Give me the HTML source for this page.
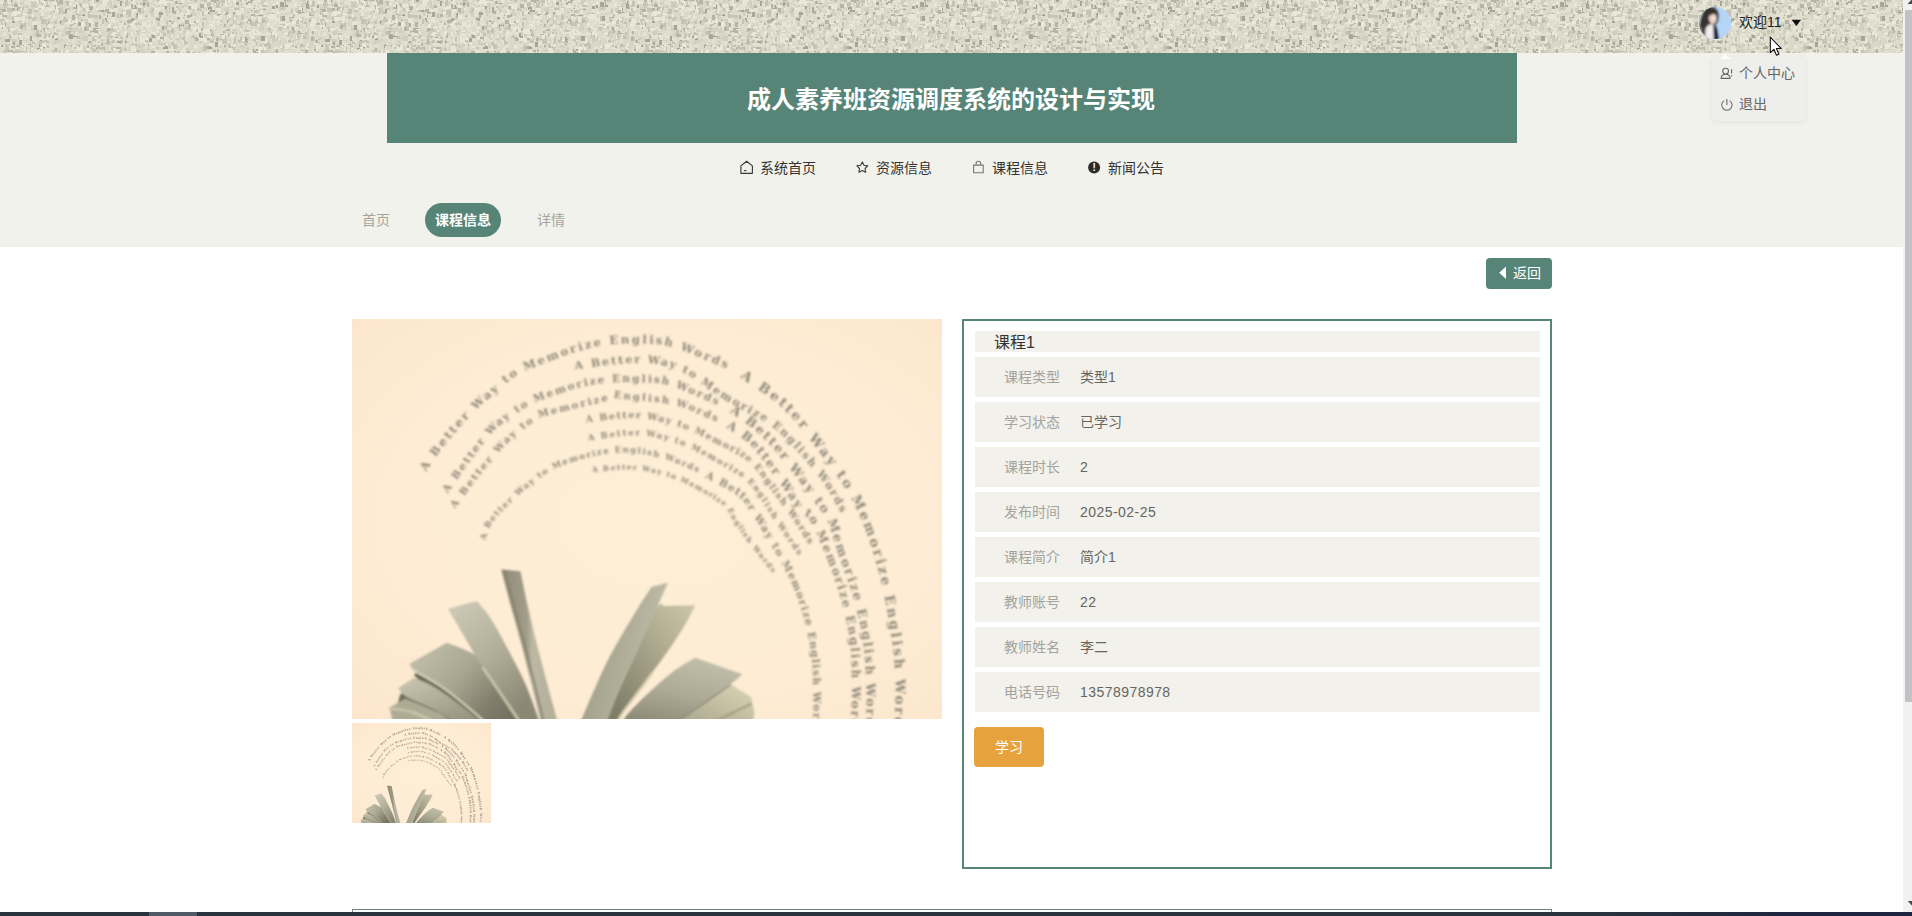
<!DOCTYPE html>
<html lang="zh-CN">
<head>
<meta charset="utf-8">
<title>成人素养班资源调度系统的设计与实现</title>
<style>
*{box-sizing:border-box;margin:0;padding:0}
html,body{width:1912px;height:916px;overflow:hidden;background:#fff}
body{font-family:"Liberation Sans","Noto Sans CJK SC",sans-serif;font-size:14px;color:#333;position:relative}
.abs{position:absolute}
#page{position:absolute;left:0;top:0;width:1903px;height:912px;overflow:hidden;background:#fff}
.tex{position:absolute;left:-4px;top:-4px;display:block;filter:blur(0.6px)}
#head{position:absolute;left:0;top:53px;width:1904px;height:194px;background:#f2f2ec}
#banner{position:absolute;left:387px;top:53px;width:1130px;height:90px;background:#568578;color:#fff;font-size:24px;font-weight:700;text-align:center;line-height:90px;letter-spacing:0}
#banner span{position:relative;top:2px;left:-1px}
.nav{position:absolute;top:158px;height:20px;line-height:20px;font-size:14px;color:#333;white-space:nowrap}
.nav svg{position:absolute;left:-20px;top:3px}
.bc{position:absolute;top:203px;height:34px;line-height:34px;font-size:14px;color:#a5a59d;white-space:nowrap}
#pill{position:absolute;left:425px;top:203px;width:76px;height:34px;border-radius:17px;background:#568578;color:#fff;font-weight:700;text-align:center;line-height:34px;font-size:14px}
#back{position:absolute;left:1486px;top:258px;width:66px;height:31px;border-radius:4px;background:#568578;color:#fff;font-size:14px;line-height:31px}
#back span{position:absolute;left:27px;top:0}
#photo{position:absolute;left:352px;top:319px;width:590px;height:400px;overflow:hidden;background:#feecd4}
#thumb{position:absolute;left:352px;top:723px;width:139px;height:100px;overflow:hidden;background:#feecd4}
#panel{position:absolute;left:962px;top:319px;width:590px;height:550px;border:2px solid #568578;background:#fff}
.row{position:absolute;left:975px;width:565px;height:40px;background:#f2f1eb;line-height:40px;font-size:14px}
.row .l{position:absolute;left:29px;color:#a3a39d}
.row .v{position:absolute;left:105px;color:#66665f}
.row .d{letter-spacing:.45px}
#trow{position:absolute;left:975px;top:331px;width:565px;height:21px;background:#f2f1eb;font-size:16px;line-height:21px;color:#333}
#trow span{position:absolute;left:19px;top:1px}
#study{position:absolute;left:974px;top:727px;width:70px;height:40px;border-radius:4px;background:#e6a23c;color:#fff;font-size:14px;text-align:center;line-height:40px}
#next{position:absolute;left:352px;top:909px;width:1200px;height:20px;border:1px solid #6a857c;background:#fff}
#sb{position:absolute;left:1903px;top:0;width:9px;height:912px;background:#f2f1f2;overflow:hidden}
#sb i{position:absolute;left:2px;top:10px;width:7px;height:692px;background:#c2c1c3}
#sb svg{position:absolute;left:0}
#task{position:absolute;left:0;top:912px;width:1912px;height:4px;background:linear-gradient(90deg,#27333d 0,#27333d 1600px,#1d2440 1800px)}
#task i{position:absolute;left:149px;top:0;width:48px;height:4px;background:#4f5a66}
#user{position:absolute;left:1739px;top:12px;height:20px;line-height:20px;font-size:14px;color:#222;white-space:nowrap}
#avatar{position:absolute;left:1698.5px;top:7px;width:32px;height:32px;border-radius:50%;overflow:hidden;background:#b7d3f3}
#menu{position:absolute;left:1712px;top:57px;width:93px;height:64px;background:#eeeeec;box-shadow:0 1px 6px rgba(0,0,0,.07);border-radius:3px}
.mi{position:absolute;left:1739px;height:20px;line-height:20px;font-size:14px;color:#666;white-space:nowrap}
</style>
</head>
<body>
<div id="page">
<svg class="tex" width="1912" height="60"><defs><pattern id="tx" width="320" height="60" patternUnits="userSpaceOnUse"><rect width="320" height="60" fill="#d9d8c7"/><path fill="#e8e7d9" d="M200 39h3v2h-3zM185 35h4v2h-4zM297 23h2v4h-2zM283 52h2v2h-2zM248 24h3v2h-3zM40 9h2v2h-2zM142 -2h2v3h-2zM-2 34h2v2h-2zM312 -1h2v3h-2zM184 28h3v4h-3zM39 12h3v3h-3zM212 51h3v4h-3zM68 24h2v3h-2zM153 48h2v2h-2zM180 18h3v2h-3zM80 14h2v2h-2zM7 14h3v3h-3zM81 1h3v3h-3zM233 9h3v2h-3zM180 9h3v2h-3zM256 47h2v2h-2zM115 3h5v5h-5zM182 59h2v5h-2zM23 38h3v4h-3zM145 47h2v3h-2zM146 27h3v2h-3zM295 3h2v2h-2zM141 54h5v4h-5zM190 18h3v3h-3zM98 43h3v2h-3zM127 21h5v3h-5zM141 4h3v2h-3zM102 44h4v4h-4zM199 5h3v4h-3zM173 33h2v2h-2zM248 -2h3v4h-3zM153 59h2v5h-2zM167 26h3v3h-3zM124 24h3v2h-3zM94 18h3v4h-3zM235 0h2v5h-2zM102 14h2v2h-2zM102 50h5v5h-5zM102 58h5v3h-5zM56 50h2v3h-2zM233 47h4v3h-4zM85 57h2v4h-2zM99 17h3v3h-3zM52 2h3v3h-3zM158 44h4v5h-4zM79 6h4v3h-4zM74 26h2v5h-2zM257 -2h2v2h-2zM101 58h2v5h-2zM1 52h4v5h-4zM316 35h2v3h-2zM14 -1h2v2h-2zM32 45h2v5h-2zM145 28h5v2h-5zM238 43h2v3h-2zM176 29h2v2h-2zM293 58h4v3h-4zM116 29h2v5h-2zM276 11h2v3h-2zM193 23h3v3h-3zM106 8h3v3h-3zM93 28h3v5h-3zM126 36h5v3h-5zM309 48h4v5h-4zM210 38h2v2h-2zM202 17h4v2h-4zM90 53h2v5h-2zM205 26h3v4h-3zM216 -2h5v2h-5zM93 57h2v3h-2zM24 43h5v3h-5zM156 36h5v2h-5zM233 32h2v3h-2zM106 10h2v2h-2zM74 13h3v4h-3zM159 36h2v2h-2zM308 -1h3v4h-3zM90 22h3v2h-3zM111 9h3v2h-3zM245 1h5v5h-5zM195 51h3v2h-3zM319 21h3v2h-3zM222 53h4v2h-4zM124 7h3v3h-3zM169 49h4v3h-4zM69 26h3v4h-3zM87 11h3v3h-3zM250 3h3v3h-3zM122 59h2v2h-2zM177 53h3v2h-3zM141 5h4v4h-4zM3 21h5v5h-5zM49 14h2v4h-2zM119 58h2v3h-2zM175 39h2v3h-2zM271 57h3v4h-3zM297 23h4v3h-4zM223 40h4v3h-4zM279 35h2v3h-2zM266 12h5v2h-5zM287 36h2v2h-2zM208 36h4v2h-4zM258 4h2v4h-2zM29 39h4v3h-4zM87 32h4v3h-4zM157 6h2v5h-2zM103 0h3v3h-3zM127 13h4v3h-4zM71 16h4v3h-4zM227 42h5v5h-5zM291 42h2v4h-2zM205 13h4v2h-4zM101 34h2v4h-2zM225 -2h5v3h-5zM298 2h3v2h-3zM9 46h3v4h-3zM8 11h3v2h-3zM22 3h2v4h-2zM45 -1h3v2h-3zM65 14h4v3h-4zM44 57h2v3h-2zM289 48h3v2h-3zM151 16h3v2h-3zM220 53h3v2h-3zM10 49h3v5h-3zM169 55h5v3h-5zM319 42h2v2h-2zM1 41h4v2h-4zM250 52h4v5h-4zM252 9h2v4h-2zM103 31h2v2h-2zM44 58h2v2h-2zM77 53h5v3h-5zM99 27h5v2h-5zM274 46h4v4h-4zM150 49h2v2h-2z"/><path fill="#dad9ca" d="M17 3h4v2h-4zM44 33h2v2h-2zM274 5h3v2h-3zM90 4h4v5h-4zM188 4h5v2h-5zM122 3h2v5h-2zM173 44h4v3h-4zM58 30h4v2h-4zM177 36h3v3h-3zM179 8h2v3h-2zM218 53h3v2h-3zM261 58h2v5h-2zM73 42h4v3h-4zM170 11h3v2h-3zM300 55h2v2h-2zM311 50h5v2h-5zM177 7h3v5h-3zM121 46h3v4h-3zM232 40h5v3h-5zM254 6h4v3h-4zM7 53h4v4h-4zM164 41h4v2h-4zM52 54h4v3h-4zM130 57h5v4h-5zM171 33h3v2h-3zM194 19h5v2h-5zM64 50h2v3h-2zM205 7h5v3h-5zM171 33h3v2h-3zM64 0h3v4h-3zM319 17h2v3h-2zM123 57h4v3h-4zM219 40h5v5h-5zM5 2h2v2h-2zM241 15h3v2h-3zM71 23h3v2h-3zM266 46h4v2h-4zM255 55h3v2h-3zM99 2h5v5h-5zM153 37h3v3h-3zM109 41h5v2h-5zM144 27h5v4h-5zM182 6h4v3h-4zM85 28h4v2h-4zM130 49h2v3h-2zM209 22h2v5h-2zM232 3h2v5h-2zM62 12h2v2h-2zM122 28h3v3h-3zM12 59h4v2h-4zM187 12h5v3h-5zM317 29h3v2h-3zM275 56h2v3h-2zM303 3h3v3h-3zM34 14h3v2h-3zM117 6h3v2h-3zM118 45h4v5h-4zM36 21h4v2h-4zM52 38h5v2h-5zM188 9h3v3h-3zM14 48h2v2h-2zM77 38h5v4h-5zM159 1h2v3h-2zM111 37h5v2h-5zM296 13h3v3h-3zM226 30h5v3h-5zM314 29h2v2h-2zM44 49h3v3h-3zM65 54h2v2h-2zM71 14h3v3h-3zM301 14h3v2h-3zM74 16h2v2h-2zM270 -1h2v2h-2zM100 31h2v3h-2zM210 50h4v5h-4zM30 17h4v3h-4zM197 19h3v2h-3zM272 28h3v5h-3zM209 -1h5v2h-5zM233 6h5v2h-5zM15 20h5v4h-5zM228 40h4v2h-4zM165 36h2v5h-2zM61 27h2v5h-2zM48 55h3v5h-3zM102 43h3v4h-3zM148 46h3v3h-3zM246 25h3v3h-3zM41 50h3v2h-3zM93 47h2v2h-2zM204 48h2v2h-2zM150 10h4v5h-4zM240 29h2v2h-2zM71 42h3v3h-3zM149 51h3v5h-3zM12 -1h5v5h-5zM185 19h2v5h-2zM105 16h4v4h-4zM281 54h3v5h-3zM241 47h5v2h-5zM283 43h3v5h-3zM117 49h3v4h-3zM253 20h4v5h-4zM117 23h3v2h-3zM162 28h3v4h-3zM183 34h5v3h-5zM246 35h2v4h-2zM30 53h3v3h-3zM28 55h3v3h-3zM130 48h2v2h-2zM192 8h3v3h-3zM101 21h2v3h-2zM93 21h4v3h-4zM42 54h4v2h-4zM137 5h2v2h-2zM197 42h2v2h-2zM113 6h5v2h-5zM120 18h3v2h-3zM9 8h3v2h-3zM101 37h3v2h-3zM198 31h3v3h-3zM22 14h2v2h-2zM262 50h4v3h-4zM203 39h3v4h-3zM94 59h4v2h-4zM19 42h4v5h-4zM252 47h2v2h-2zM176 10h4v2h-4zM223 1h4v2h-4zM196 10h4v2h-4zM271 13h4v3h-4zM177 55h5v5h-5zM205 0h5v2h-5zM114 34h2v4h-2zM111 15h5v4h-5zM319 38h4v5h-4zM181 20h2v2h-2zM80 18h3v2h-3zM146 8h4v3h-4zM237 46h2v2h-2zM167 45h5v5h-5zM248 59h2v5h-2zM144 38h2v5h-2zM78 17h3v3h-3zM288 10h5v3h-5zM262 27h4v3h-4zM150 34h4v5h-4zM188 33h5v4h-5zM269 13h3v3h-3zM46 10h3v5h-3zM248 12h3v5h-3zM260 45h2v3h-2zM198 51h5v4h-5zM65 35h2v3h-2zM182 44h2v2h-2zM137 2h3v3h-3zM289 34h3v3h-3zM15 56h2v5h-2zM216 38h2v2h-2zM279 43h2v3h-2zM127 44h5v3h-5zM89 17h2v4h-2zM246 23h2v5h-2zM27 53h3v2h-3zM273 41h3v3h-3zM28 32h2v2h-2zM130 58h4v2h-4zM229 11h4v4h-4zM152 7h2v2h-2zM302 12h2v4h-2zM276 16h5v3h-5zM135 23h5v3h-5zM173 35h3v4h-3zM319 49h3v2h-3zM176 31h3v5h-3zM266 11h4v3h-4zM127 -1h3v3h-3zM130 1h2v4h-2zM133 51h3v2h-3zM192 23h2v3h-2zM11 4h3v5h-3zM223 23h2v2h-2zM5 4h2v4h-2zM211 51h4v5h-4zM248 43h3v5h-3zM207 58h4v2h-4zM27 9h2v2h-2zM151 0h2v4h-2z"/><path fill="#d1d0bf" d="M112 38h4v2h-4zM283 34h5v2h-5zM31 1h5v5h-5zM195 54h3v5h-3zM190 7h2v4h-2zM270 32h3v2h-3zM250 20h2v4h-2zM243 56h4v2h-4zM235 23h5v3h-5zM240 37h2v2h-2zM139 0h2v2h-2zM285 -1h4v3h-4zM226 30h2v3h-2zM151 17h3v2h-3zM268 52h2v4h-2zM303 22h5v5h-5zM74 16h5v3h-5zM217 44h4v5h-4zM31 45h5v4h-5zM133 13h3v2h-3zM205 17h5v3h-5zM159 10h3v4h-3zM228 37h5v3h-5zM128 45h3v3h-3zM255 31h2v5h-2zM14 25h2v2h-2zM227 13h4v3h-4zM221 42h3v4h-3zM131 12h2v3h-2zM213 21h5v3h-5zM211 56h2v3h-2zM210 1h4v2h-4zM228 55h2v3h-2zM14 17h5v3h-5zM42 1h3v3h-3zM240 -1h3v3h-3zM132 45h4v2h-4zM150 -2h3v3h-3zM236 59h2v3h-2zM153 50h2v2h-2zM306 14h2v3h-2zM206 4h3v2h-3zM280 7h2v2h-2zM42 55h5v3h-5zM18 0h4v5h-4zM158 47h2v5h-2zM31 37h2v2h-2zM133 5h3v2h-3zM182 19h4v2h-4zM88 37h3v2h-3zM114 37h2v3h-2zM27 56h2v2h-2zM236 3h3v5h-3zM24 15h5v3h-5zM174 7h4v2h-4zM68 42h2v2h-2zM235 26h3v2h-3zM314 7h3v5h-3zM82 59h5v2h-5zM75 7h2v3h-2zM291 35h3v5h-3zM91 55h4v5h-4zM312 20h4v2h-4zM213 38h2v3h-2zM96 28h2v5h-2zM72 20h5v2h-5zM181 13h5v3h-5zM162 27h2v2h-2zM36 9h3v3h-3zM174 11h3v4h-3zM96 18h2v3h-2zM241 36h2v2h-2zM303 54h2v5h-2zM232 38h2v2h-2zM7 15h2v3h-2zM72 44h5v5h-5zM222 28h4v5h-4zM183 59h2v2h-2zM242 22h5v3h-5zM138 52h4v2h-4zM52 21h3v3h-3zM99 41h3v2h-3zM223 46h4v4h-4zM4 27h2v5h-2zM189 54h2v4h-2zM27 9h2v5h-2zM260 1h2v2h-2zM27 51h3v2h-3zM3 2h3v2h-3zM59 20h4v2h-4zM193 34h3v5h-3zM53 59h2v3h-2zM291 27h2v2h-2zM289 12h4v5h-4zM179 45h3v3h-3zM232 16h3v5h-3zM162 -2h3v5h-3zM87 5h3v4h-3zM298 -2h3v2h-3zM14 15h3v2h-3zM77 13h2v3h-2zM62 53h4v2h-4zM12 40h5v3h-5zM5 22h2v3h-2zM96 2h4v3h-4zM13 21h3v2h-3zM157 38h2v4h-2zM220 40h4v3h-4zM55 51h3v2h-3zM22 13h4v5h-4zM211 42h5v2h-5zM103 25h2v5h-2zM245 13h5v3h-5zM98 5h3v3h-3zM12 -1h2v5h-2zM84 4h4v5h-4zM95 11h3v3h-3zM88 55h3v2h-3zM28 44h4v2h-4zM84 21h5v3h-5zM179 10h2v3h-2zM223 5h2v4h-2zM146 53h2v4h-2zM72 44h2v5h-2zM142 48h2v3h-2zM98 13h5v2h-5zM160 34h2v2h-2zM210 37h3v2h-3zM130 50h5v4h-5zM156 39h2v5h-2zM88 53h5v2h-5zM12 20h2v4h-2zM253 11h2v3h-2zM190 58h3v3h-3zM182 0h2v5h-2zM84 27h3v2h-3zM73 38h5v4h-5zM35 15h2v5h-2zM22 24h2v4h-2zM3 18h3v3h-3zM23 23h2v5h-2zM224 33h3v5h-3zM-2 28h3v4h-3zM191 20h3v2h-3zM134 37h3v4h-3zM207 7h3v2h-3zM184 20h3v2h-3zM152 26h4v4h-4zM146 26h3v3h-3zM146 37h2v3h-2zM206 25h5v3h-5zM96 52h2v4h-2zM104 32h2v2h-2zM138 12h3v2h-3zM205 57h4v3h-4zM147 12h2v5h-2zM124 19h3v3h-3z"/><path fill="#e1e0d1" d="M28 37h2v4h-2zM216 47h5v4h-5zM183 17h4v3h-4zM45 58h3v2h-3zM109 47h3v2h-3zM83 26h3v2h-3zM310 34h4v3h-4zM198 23h5v4h-5zM203 1h2v3h-2zM81 5h2v3h-2zM243 28h3v3h-3zM173 45h2v2h-2zM262 -1h5v2h-5zM239 14h2v3h-2zM59 56h5v2h-5zM242 54h5v2h-5zM106 -1h3v2h-3zM100 42h4v4h-4zM35 40h3v3h-3zM185 7h2v5h-2zM218 30h2v5h-2zM41 14h2v2h-2zM251 42h4v4h-4zM43 49h3v2h-3zM155 42h3v4h-3zM142 36h3v4h-3zM123 29h4v5h-4zM29 29h2v3h-2zM135 22h4v3h-4zM164 46h3v2h-3zM205 39h5v3h-5zM69 33h3v3h-3zM190 15h4v2h-4zM136 55h2v2h-2zM26 -1h5v3h-5zM213 3h5v5h-5zM251 10h2v2h-2zM236 12h2v2h-2zM199 1h4v2h-4zM141 3h2v2h-2zM104 22h2v4h-2zM205 0h2v5h-2zM29 14h3v2h-3zM171 21h2v4h-2zM280 32h2v3h-2zM148 16h5v2h-5zM128 45h3v3h-3zM93 13h3v2h-3zM257 31h3v2h-3zM227 56h3v2h-3zM59 1h3v2h-3zM109 0h4v3h-4zM201 42h5v2h-5zM288 54h3v5h-3zM184 39h3v2h-3zM85 7h5v4h-5zM91 34h2v3h-2zM78 22h3v4h-3zM163 5h5v2h-5zM319 47h3v4h-3zM232 51h3v4h-3zM256 55h2v2h-2zM188 0h2v3h-2zM140 41h3v2h-3zM262 14h2v3h-2zM-1 34h2v2h-2zM180 32h2v4h-2zM299 6h4v3h-4zM285 55h2v2h-2zM273 -2h5v3h-5zM113 4h3v2h-3zM265 14h5v3h-5zM290 54h5v2h-5zM52 13h5v3h-5zM102 16h2v5h-2zM8 20h3v3h-3zM186 56h3v2h-3zM241 52h4v4h-4zM-2 31h2v3h-2zM251 35h5v2h-5zM319 18h4v2h-4zM103 17h2v3h-2zM116 6h3v4h-3zM119 30h5v5h-5zM165 59h2v2h-2zM220 15h5v3h-5zM9 7h3v3h-3zM0 45h5v3h-5zM296 52h3v2h-3zM187 31h2v5h-2zM105 41h5v3h-5zM133 4h3v4h-3zM190 41h3v5h-3zM269 51h3v2h-3zM282 5h5v2h-5zM250 23h3v3h-3zM276 37h2v4h-2zM285 43h2v3h-2zM213 0h3v2h-3zM314 3h2v2h-2zM28 18h3v4h-3zM288 19h3v3h-3zM124 22h4v3h-4zM162 14h5v2h-5zM246 49h4v4h-4zM103 57h3v3h-3zM44 14h3v2h-3zM188 14h3v3h-3zM119 4h3v2h-3zM139 34h3v2h-3zM115 43h2v4h-2zM319 49h5v5h-5zM134 13h3v2h-3zM81 42h3v2h-3zM83 4h4v2h-4zM235 31h5v4h-5zM275 35h3v2h-3zM171 23h2v3h-2zM285 1h3v3h-3zM164 25h2v2h-2zM261 55h2v4h-2zM65 54h2v4h-2zM145 15h3v4h-3zM168 12h2v2h-2zM77 24h4v2h-4zM308 5h3v4h-3zM225 17h3v3h-3zM221 34h3v2h-3zM272 47h3v3h-3zM197 27h5v3h-5zM78 31h4v3h-4zM256 55h4v2h-4zM71 43h4v3h-4zM212 36h3v3h-3zM122 41h3v2h-3zM111 24h5v4h-5zM85 20h2v2h-2zM200 33h2v3h-2zM195 19h3v4h-3zM221 0h3v2h-3zM186 20h2v2h-2zM295 11h3v3h-3zM116 18h5v2h-5zM285 56h2v2h-2zM319 4h3v3h-3zM309 44h2v3h-2zM153 7h3v2h-3zM224 57h3v3h-3zM276 14h5v2h-5zM286 13h2v4h-2zM56 42h3v2h-3zM162 -2h2v4h-2zM126 39h5v5h-5zM313 18h3v5h-3zM161 12h5v3h-5zM23 58h5v3h-5zM70 42h5v2h-5zM213 54h2v4h-2zM12 52h4v5h-4zM56 12h3v3h-3zM45 6h4v3h-4zM302 59h2v2h-2zM3 50h3v5h-3zM180 33h3v2h-3zM35 49h3v2h-3zM299 54h3v2h-3zM227 23h2v5h-2zM36 21h4v4h-4zM196 57h4v3h-4zM294 28h2v3h-2zM170 40h2v5h-2zM186 55h3v4h-3zM75 6h2v3h-2zM205 26h5v3h-5zM35 56h5v3h-5zM161 55h2v3h-2zM67 -2h4v3h-4zM5 38h4v5h-4zM318 37h2v2h-2zM306 34h4v2h-4zM284 15h5v3h-5zM233 11h3v3h-3zM177 1h3v5h-3zM126 -1h2v2h-2zM116 20h3v2h-3zM125 8h2v3h-2zM217 -2h2v4h-2zM194 7h4v3h-4zM310 44h3v5h-3zM20 18h3v2h-3zM119 37h3v4h-3zM224 22h2v5h-2zM116 45h4v2h-4zM148 33h4v2h-4zM58 3h3v3h-3zM318 7h3v2h-3zM132 3h3v4h-3zM150 33h3v5h-3zM24 17h3v5h-3zM274 14h3v3h-3zM24 44h4v5h-4zM82 29h5v4h-5zM148 49h5v5h-5zM296 49h3v2h-3zM198 0h5v2h-5zM168 41h2v3h-2zM267 2h5v4h-5zM23 9h5v3h-5z"/><path fill="#c5c4b3" d="M293 41h3v5h-3zM181 41h5v3h-5zM4 29h5v2h-5zM25 27h5v5h-5zM150 39h2v4h-2zM263 21h5v3h-5zM112 37h3v5h-3zM203 45h2v2h-2zM0 47h2v4h-2zM81 40h3v3h-3zM91 25h3v2h-3zM32 14h4v2h-4zM99 51h2v3h-2zM20 50h5v2h-5zM297 49h2v5h-2zM233 29h2v2h-2zM252 55h3v2h-3zM202 56h3v2h-3zM104 30h2v2h-2zM110 26h3v4h-3zM147 45h2v2h-2zM31 -1h4v5h-4zM118 18h2v4h-2zM96 0h2v2h-2zM111 2h2v5h-2zM79 18h4v3h-4zM182 59h2v5h-2zM294 42h4v4h-4zM272 38h2v3h-2zM260 21h3v3h-3zM136 23h5v2h-5zM125 8h5v3h-5zM61 19h5v2h-5zM31 54h4v5h-4zM15 58h2v2h-2zM44 34h4v2h-4zM42 25h3v3h-3zM141 11h5v2h-5zM4 23h3v2h-3zM78 14h3v5h-3zM8 37h3v3h-3zM176 4h2v4h-2zM179 48h2v3h-2zM38 45h2v4h-2zM274 36h3v2h-3zM246 46h4v3h-4zM281 1h3v3h-3zM4 21h2v5h-2zM265 0h3v4h-3zM239 11h2v2h-2zM43 11h5v2h-5zM305 19h2v4h-2zM75 36h5v2h-5zM19 16h2v4h-2zM65 14h4v4h-4zM283 21h2v2h-2zM91 26h4v3h-4zM78 57h2v2h-2zM171 18h2v3h-2zM160 27h3v2h-3zM284 28h5v2h-5zM6 26h3v2h-3zM26 31h4v3h-4zM11 31h3v4h-3zM131 -1h5v2h-5zM178 13h2v5h-2zM319 32h4v3h-4zM277 16h2v5h-2zM185 27h2v4h-2zM242 28h3v4h-3zM46 45h3v4h-3zM63 24h3v3h-3zM74 24h3v4h-3zM269 45h3v5h-3zM265 29h2v2h-2zM25 12h3v2h-3zM1 55h2v3h-2zM9 48h5v3h-5zM136 32h2v2h-2zM224 27h2v4h-2zM102 12h3v4h-3zM131 36h5v2h-5zM44 32h5v4h-5zM145 6h2v2h-2zM180 23h3v3h-3zM319 53h3v5h-3zM19 54h5v3h-5zM151 6h3v5h-3zM319 56h2v4h-2zM310 52h2v2h-2zM0 26h3v3h-3zM68 17h3v3h-3zM55 12h2v4h-2zM288 3h4v4h-4zM223 6h5v2h-5zM50 27h5v4h-5zM67 25h3v2h-3zM248 0h3v5h-3zM254 28h2v3h-2zM91 37h2v2h-2zM183 30h3v5h-3zM217 44h3v3h-3zM306 16h3v2h-3zM162 18h2v2h-2zM44 20h2v4h-2zM5 2h2v2h-2zM140 17h3v5h-3zM269 20h4v2h-4zM57 3h2v2h-2zM133 14h2v4h-2zM86 7h3v2h-3zM242 44h3v5h-3zM120 22h3v3h-3zM102 19h3v2h-3zM230 1h2v4h-2zM169 28h2v5h-2zM23 6h5v2h-5zM129 43h2v5h-2zM19 8h5v2h-5zM246 15h2v2h-2zM136 47h2v3h-2z"/><path fill="#b6b5a5" d="M201 23h5v2h-5zM226 49h4v3h-4zM42 49h5v3h-5zM267 45h5v2h-5zM242 30h4v4h-4zM110 45h2v3h-2zM132 21h3v2h-3zM123 0h4v3h-4zM79 -2h3v2h-3zM37 21h3v4h-3zM246 1h5v3h-5zM140 34h2v3h-2zM226 25h3v5h-3zM151 31h2v2h-2zM55 3h3v5h-3zM92 39h3v2h-3zM250 6h3v3h-3zM155 24h3v5h-3zM291 37h3v2h-3zM225 36h5v4h-5zM280 40h2v4h-2zM100 50h4v3h-4zM183 7h2v5h-2zM3 11h4v2h-4zM294 57h3v4h-3zM305 8h3v5h-3zM216 4h3v3h-3zM43 59h2v5h-2zM180 31h4v2h-4zM7 4h4v2h-4zM315 15h2v2h-2zM167 18h2v2h-2zM177 26h4v5h-4zM173 50h3v5h-3zM281 -2h2v3h-2zM20 8h2v2h-2zM214 50h2v2h-2zM105 47h2v3h-2zM94 0h2v3h-2zM225 6h2v4h-2zM215 46h2v4h-2zM186 9h2v3h-2zM77 23h4v5h-4zM85 59h3v4h-3zM15 57h4v2h-4zM34 17h2v5h-2zM202 14h3v4h-3zM171 39h2v3h-2zM54 5h3v2h-3zM108 52h2v3h-2zM135 2h2v3h-2zM309 30h2v2h-2zM70 2h4v2h-4zM276 15h3v5h-3zM100 27h3v3h-3zM76 17h4v5h-4zM107 7h3v4h-3zM60 40h2v3h-2zM252 54h3v2h-3zM174 10h2v2h-2z"/><path fill="#a7a696" d="M79 8h2v5h-2zM5 49h2v2h-2zM164 37h2v3h-2zM30 5h3v4h-3zM256 33h2v5h-2zM69 23h5v5h-5zM100 17h2v4h-2zM74 13h5v3h-5zM75 31h2v2h-2zM273 17h2v2h-2zM213 29h2v2h-2zM133 22h5v3h-5zM249 48h5v2h-5zM85 22h4v4h-4zM111 30h3v5h-3zM248 56h2v3h-2zM267 12h5v3h-5zM167 49h5v5h-5zM42 48h2v4h-2zM302 35h5v3h-5zM16 23h4v4h-4zM221 51h3v5h-3zM21 49h3v3h-3zM143 54h3v3h-3zM164 11h4v2h-4zM317 55h3v3h-3zM160 21h2v3h-2zM270 30h3v5h-3zM234 13h5v5h-5zM77 36h5v5h-5zM203 3h2v3h-2zM56 38h4v4h-4zM233 54h2v2h-2zM183 7h3v2h-3zM8 1h5v2h-5zM71 55h3v3h-3zM221 24h3v3h-3zM1 9h2v4h-2zM105 49h3v2h-3z"/><path fill="#dad9ca" d="M46 45h4v3h-4zM294 4h2v4h-2zM199 37h2v3h-2zM25 45h5v3h-5zM120 10h3v2h-3zM171 40h2v2h-2zM0 17h3v3h-3zM241 24h2v2h-2zM72 19h3v3h-3zM199 52h2v3h-2zM123 27h2v2h-2zM211 2h3v5h-3zM190 58h3v5h-3zM75 44h3v4h-3zM22 48h4v3h-4zM254 51h4v3h-4zM4 0h3v3h-3zM154 20h5v4h-5zM202 23h5v3h-5zM237 5h2v4h-2zM12 49h2v2h-2zM262 -1h2v2h-2zM273 14h5v5h-5zM163 19h4v2h-4zM51 4h3v3h-3zM223 27h2v2h-2zM25 53h5v5h-5zM20 57h2v2h-2zM255 33h5v2h-5zM217 5h5v2h-5zM250 36h3v2h-3zM304 11h2v5h-2zM240 46h3v2h-3zM125 -2h3v3h-3zM169 15h3v5h-3zM179 21h3v2h-3zM142 -1h3v2h-3zM54 27h3v2h-3zM205 5h3v2h-3zM134 21h2v2h-2zM108 34h2v3h-2zM28 58h3v2h-3zM265 8h2v2h-2zM49 3h3v2h-3zM10 39h5v4h-5zM117 2h3v3h-3zM96 51h4v2h-4zM-2 7h2v2h-2zM230 28h3v4h-3zM46 1h5v3h-5zM213 2h2v2h-2zM283 10h3v4h-3zM67 54h2v4h-2zM37 28h3v5h-3zM87 49h3v3h-3zM99 7h2v2h-2zM172 30h5v3h-5zM239 34h4v2h-4zM10 12h2v2h-2zM29 12h2v2h-2zM26 47h5v3h-5zM23 18h2v3h-2zM257 43h3v2h-3zM160 52h2v3h-2zM188 32h5v3h-5zM145 46h2v4h-2zM152 21h3v3h-3zM187 2h2v2h-2zM157 49h5v3h-5zM245 26h4v2h-4zM300 34h2v3h-2zM93 29h3v4h-3zM108 30h5v5h-5zM215 6h3v2h-3zM139 12h3v4h-3zM54 45h4v5h-4zM70 18h5v3h-5zM276 19h5v2h-5zM159 5h2v4h-2zM243 51h2v3h-2zM239 35h4v2h-4zM163 49h2v4h-2zM84 5h2v3h-2zM59 52h2v3h-2zM292 -2h3v4h-3zM168 59h5v3h-5zM132 49h5v4h-5zM21 7h2v3h-2zM0 3h4v3h-4zM216 47h4v4h-4zM149 1h5v2h-5zM130 50h3v2h-3zM235 36h2v2h-2zM93 51h2v5h-2zM194 32h2v5h-2zM244 50h5v3h-5zM48 33h4v3h-4zM55 6h3v3h-3zM195 34h3v3h-3zM160 11h3v2h-3zM182 10h5v2h-5zM3 11h2v3h-2zM2 30h3v4h-3zM60 15h2v2h-2zM11 2h3v5h-3zM156 30h2v2h-2zM252 24h2v4h-2zM27 13h2v5h-2zM78 50h5v5h-5zM95 30h2v4h-2zM120 55h3v2h-3zM70 2h3v2h-3zM299 12h4v4h-4zM107 44h3v5h-3zM221 59h3v2h-3zM222 16h3v3h-3zM294 41h2v2h-2zM44 30h5v4h-5zM219 24h3v2h-3zM49 30h5v2h-5zM146 53h2v3h-2zM146 33h4v3h-4zM184 29h4v2h-4zM52 3h2v2h-2zM245 37h5v4h-5zM46 11h2v2h-2zM259 20h3v3h-3zM205 8h3v3h-3zM125 20h2v2h-2zM190 35h3v3h-3zM68 33h3v3h-3zM49 7h3v2h-3zM95 8h5v4h-5zM223 39h4v2h-4zM50 32h5v4h-5zM112 17h4v3h-4zM223 41h4v4h-4zM130 38h2v2h-2zM154 48h2v3h-2zM254 45h3v5h-3zM263 46h3v3h-3zM19 39h2v4h-2zM76 36h3v3h-3zM153 56h4v3h-4zM62 49h3v3h-3zM281 10h2v2h-2zM140 41h4v5h-4zM260 15h2v3h-2zM220 58h4v2h-4zM130 42h2v3h-2zM51 9h2v3h-2zM170 33h2v4h-2zM36 43h2v2h-2zM4 58h2v3h-2zM121 -1h3v3h-3zM169 36h5v5h-5zM226 26h3v4h-3zM54 42h4v3h-4zM7 54h3v2h-3zM26 52h2v2h-2zM131 24h3v5h-3zM308 54h3v2h-3zM-1 50h4v3h-4zM12 25h3v4h-3zM164 37h4v4h-4zM126 36h3v3h-3zM298 48h2v2h-2zM32 16h2v3h-2zM58 11h3v5h-3zM30 34h2v3h-2zM78 30h2v4h-2zM299 28h3v3h-3zM272 50h2v3h-2zM190 10h2v3h-2zM230 38h4v5h-4zM177 34h3v5h-3zM318 35h2v2h-2zM140 21h3v5h-3zM199 46h4v5h-4zM188 17h5v3h-5zM285 46h5v3h-5zM13 35h2v4h-2zM109 18h2v3h-2zM143 32h5v2h-5zM73 9h2v4h-2zM189 46h3v2h-3zM126 46h2v3h-2zM294 57h3v2h-3zM90 28h3v4h-3zM318 12h2v5h-2zM176 5h2v3h-2zM8 59h2v3h-2zM99 32h3v2h-3zM150 57h4v2h-4zM208 57h3v2h-3zM136 6h4v2h-4zM-1 25h3v3h-3zM72 47h3v2h-3zM259 32h4v2h-4zM45 56h2v2h-2zM106 46h5v5h-5zM103 7h5v5h-5zM213 2h3v5h-3zM227 9h3v3h-3zM144 53h2v5h-2zM49 42h4v2h-4zM298 12h5v2h-5zM164 3h2v4h-2zM165 53h5v2h-5zM208 57h2v3h-2zM128 56h4v3h-4zM309 8h3v2h-3zM204 52h3v3h-3zM88 56h5v3h-5zM233 30h2v3h-2z"/><path fill="#e8e7d9" d="M199 27h2v4h-2zM81 21h2v3h-2zM74 14h3v3h-3zM52 58h2v2h-2zM153 19h5v2h-5zM259 41h2v5h-2zM267 -2h2v3h-2zM178 41h5v3h-5zM164 28h3v2h-3zM140 18h5v3h-5zM122 54h3v3h-3zM262 2h3v2h-3zM138 30h2v3h-2zM242 34h3v2h-3zM55 23h4v2h-4zM311 44h2v5h-2zM213 55h5v3h-5zM50 19h5v3h-5zM68 -2h3v2h-3zM270 22h5v4h-5zM223 46h5v5h-5zM308 7h5v3h-5zM17 13h2v5h-2zM17 27h2v2h-2zM132 0h4v3h-4zM260 18h2v4h-2zM34 52h3v2h-3zM37 43h4v4h-4zM1 3h3v2h-3zM9 51h5v2h-5zM164 22h3v2h-3zM80 4h2v4h-2zM198 17h4v2h-4zM272 -2h5v2h-5zM128 39h2v3h-2zM216 26h2v2h-2zM282 1h2v3h-2zM90 30h3v3h-3zM162 45h2v3h-2zM10 41h2v3h-2zM117 25h2v2h-2zM260 35h3v5h-3zM203 59h4v3h-4zM33 49h3v2h-3zM119 -1h2v3h-2zM130 19h5v3h-5zM81 14h2v3h-2zM284 49h2v4h-2zM157 49h2v2h-2zM31 35h3v2h-3zM296 11h2v2h-2zM123 27h2v2h-2zM314 1h5v3h-5zM140 6h3v2h-3zM264 3h3v3h-3zM171 21h3v5h-3zM280 5h2v3h-2zM128 36h3v2h-3zM165 54h2v2h-2zM289 21h4v2h-4zM107 7h2v4h-2zM237 1h4v5h-4zM99 12h5v2h-5zM109 26h2v5h-2zM96 11h2v2h-2zM195 25h5v3h-5zM26 8h2v2h-2zM285 31h2v2h-2zM261 58h2v4h-2zM151 11h2v3h-2zM240 59h3v5h-3zM11 3h3v3h-3zM205 54h4v3h-4zM257 40h2v4h-2zM276 7h3v3h-3zM171 39h3v2h-3zM167 12h3v5h-3zM218 2h3v5h-3zM-1 6h3v2h-3zM111 -2h2v5h-2zM63 30h5v4h-5zM304 9h3v5h-3zM93 29h2v5h-2zM91 43h3v2h-3zM123 19h3v2h-3zM45 55h2v2h-2zM187 51h2v4h-2zM80 24h2v3h-2zM203 -2h3v2h-3zM203 41h3v5h-3zM311 47h4v2h-4zM313 5h5v3h-5zM260 44h2v4h-2zM264 -1h2v2h-2zM171 36h3v5h-3zM31 56h3v3h-3zM59 1h4v5h-4zM0 49h3v4h-3zM221 49h2v3h-2zM140 7h3v3h-3zM100 26h2v2h-2zM175 21h2v5h-2zM125 11h2v2h-2zM166 45h2v2h-2zM238 50h2v2h-2zM22 40h2v2h-2zM6 24h2v4h-2zM115 21h3v3h-3zM88 8h2v4h-2zM145 17h2v3h-2zM257 4h4v3h-4zM63 11h2v2h-2zM244 48h5v3h-5zM87 26h2v2h-2zM2 18h5v4h-5zM205 40h3v2h-3zM256 36h5v3h-5zM306 37h3v5h-3zM295 59h4v5h-4zM166 2h2v3h-2zM275 42h2v3h-2zM257 46h2v3h-2zM188 54h2v4h-2zM203 3h2v2h-2zM198 40h5v2h-5zM103 40h4v4h-4zM270 2h4v3h-4zM104 42h2v2h-2zM152 21h2v4h-2zM217 12h4v3h-4zM161 -2h2v4h-2zM156 16h5v5h-5zM106 21h3v2h-3zM38 24h3v5h-3zM308 6h5v2h-5zM105 13h2v5h-2zM296 15h5v5h-5zM205 42h5v2h-5zM68 -1h4v2h-4zM114 5h2v3h-2zM238 8h4v3h-4zM169 55h4v2h-4zM135 35h2v5h-2zM291 1h4v3h-4zM120 34h3v2h-3zM233 56h5v5h-5zM173 51h5v4h-5zM284 11h2v3h-2zM184 55h3v2h-3z"/><path fill="#c5c4b3" d="M210 34h5v2h-5zM30 10h2v4h-2zM250 34h4v2h-4zM94 52h4v4h-4zM262 49h2v2h-2zM306 41h4v2h-4zM93 43h3v3h-3zM255 -2h3v2h-3zM138 48h4v5h-4zM111 40h2v2h-2zM194 37h5v5h-5zM306 36h5v2h-5zM289 54h2v3h-2zM282 36h3v4h-3zM211 -2h3v2h-3zM241 55h3v3h-3zM140 58h2v5h-2zM194 8h4v3h-4zM20 11h2v3h-2zM93 7h5v2h-5zM120 52h2v5h-2zM116 32h2v3h-2zM173 18h2v3h-2zM113 4h2v3h-2zM244 4h2v2h-2zM121 39h3v3h-3zM65 2h3v3h-3zM222 6h2v3h-2zM295 18h4v2h-4zM207 14h4v3h-4zM128 8h3v3h-3zM237 48h5v3h-5zM157 40h2v2h-2zM270 36h3v2h-3zM260 19h3v2h-3zM260 28h2v3h-2zM26 20h5v3h-5zM24 10h3v5h-3zM157 45h3v5h-3zM256 -1h2v2h-2zM116 31h4v3h-4zM87 55h2v4h-2zM108 15h4v5h-4zM75 27h3v5h-3zM1 0h4v4h-4zM110 19h4v5h-4zM67 55h3v2h-3zM184 31h3v3h-3zM287 48h4v4h-4zM4 15h5v4h-5zM316 41h3v4h-3zM80 18h4v4h-4zM190 15h2v2h-2zM231 39h5v3h-5zM146 19h5v2h-5zM67 39h4v2h-4zM81 19h4v3h-4zM276 59h5v2h-5zM89 55h4v2h-4zM121 55h2v2h-2zM36 5h5v2h-5zM85 42h3v3h-3zM118 38h5v3h-5zM57 5h5v3h-5zM59 5h3v4h-3zM196 8h3v4h-3zM93 14h5v2h-5zM224 45h4v2h-4zM42 51h2v3h-2zM49 1h3v4h-3zM138 9h4v3h-4zM283 30h4v2h-4zM186 55h2v5h-2zM137 55h3v2h-3zM50 57h5v2h-5zM257 43h3v3h-3zM303 1h3v3h-3zM41 4h5v4h-5zM38 14h4v2h-4zM212 0h5v4h-5zM4 26h3v3h-3zM291 0h2v3h-2zM279 7h5v3h-5zM118 57h3v4h-3zM153 38h5v3h-5zM222 31h2v2h-2zM227 9h3v2h-3zM60 8h3v2h-3zM130 4h2v2h-2zM265 51h2v3h-2zM8 41h5v5h-5zM236 49h5v3h-5zM94 53h3v3h-3zM193 51h2v3h-2zM164 0h2v3h-2zM175 46h3v5h-3zM230 58h3v5h-3zM316 7h2v4h-2zM302 40h3v3h-3zM314 7h3v4h-3zM193 15h5v2h-5z"/><path fill="#d1d0bf" d="M0 51h2v3h-2zM105 42h5v4h-5zM59 3h3v4h-3zM122 36h2v2h-2zM14 3h3v3h-3zM32 -2h5v3h-5zM252 31h3v2h-3zM208 3h2v3h-2zM23 23h5v5h-5zM224 24h2v5h-2zM108 41h2v2h-2zM198 9h4v2h-4zM264 8h2v3h-2zM150 22h2v4h-2zM284 52h4v3h-4zM198 21h2v3h-2zM145 52h3v4h-3zM155 8h5v2h-5zM264 24h4v5h-4zM107 19h3v2h-3zM-1 27h3v2h-3zM109 33h4v2h-4zM293 32h2v3h-2zM30 59h3v3h-3zM207 12h4v4h-4zM270 19h2v3h-2zM149 45h4v5h-4zM51 0h3v3h-3zM179 14h3v2h-3zM120 43h3v5h-3zM193 2h3v4h-3zM198 34h2v2h-2zM104 5h4v3h-4zM264 20h2v4h-2zM310 34h3v3h-3zM66 14h3v5h-3zM131 25h3v2h-3zM222 37h2v4h-2zM12 3h3v3h-3zM300 7h5v5h-5zM283 5h2v2h-2zM138 56h5v4h-5zM43 8h2v2h-2zM187 48h2v2h-2zM83 31h3v3h-3zM23 4h3v2h-3zM307 6h3v5h-3zM75 59h5v2h-5zM269 35h2v3h-2zM35 42h4v3h-4zM239 11h4v5h-4zM241 19h2v3h-2zM187 45h5v2h-5zM301 59h2v5h-2zM271 24h2v4h-2zM132 6h4v2h-4zM270 19h3v4h-3zM127 49h3v2h-3zM30 27h4v2h-4zM33 52h2v3h-2zM269 4h5v2h-5zM86 22h2v2h-2zM208 46h2v5h-2zM24 54h4v2h-4zM127 30h2v3h-2zM171 28h4v3h-4zM78 22h5v3h-5zM82 45h2v3h-2zM33 55h3v2h-3zM178 43h3v3h-3zM179 30h5v3h-5zM0 58h4v5h-4zM280 23h2v4h-2zM80 58h3v3h-3zM318 45h2v3h-2zM194 8h2v5h-2zM106 48h2v3h-2zM224 54h4v3h-4zM65 20h4v5h-4zM80 31h2v3h-2zM187 34h3v3h-3zM295 43h2v2h-2zM54 51h5v3h-5zM54 35h2v2h-2zM193 30h5v2h-5zM58 47h3v3h-3zM247 0h2v3h-2zM188 5h2v5h-2zM15 37h3v2h-3zM48 10h2v3h-2zM239 35h2v2h-2zM17 31h2v3h-2zM238 47h3v3h-3zM317 9h2v4h-2zM86 48h3v2h-3zM223 36h2v2h-2zM139 20h2v3h-2zM62 42h4v5h-4zM221 51h3v3h-3zM160 12h4v2h-4zM196 24h2v3h-2zM102 7h3v3h-3zM44 44h2v2h-2zM162 28h3v2h-3zM223 22h2v2h-2zM30 34h2v3h-2zM67 33h4v2h-4zM234 9h2v3h-2zM144 23h5v4h-5zM135 55h2v3h-2zM77 7h2v4h-2zM212 35h3v5h-3zM8 38h2v4h-2zM238 53h5v4h-5zM146 58h2v5h-2zM28 46h2v3h-2zM113 45h5v3h-5zM92 18h3v2h-3zM72 52h3v5h-3zM270 21h3v3h-3zM61 33h3v3h-3zM45 3h5v2h-5zM175 17h2v2h-2zM130 16h2v5h-2zM224 49h2v5h-2zM267 31h3v3h-3zM130 36h2v2h-2zM64 32h4v2h-4zM253 21h3v3h-3zM87 59h4v4h-4zM109 35h2v3h-2zM243 19h3v2h-3zM284 44h2v2h-2zM40 31h5v2h-5zM233 57h2v2h-2zM52 5h2v3h-2zM73 56h4v4h-4zM6 18h2v3h-2zM118 51h3v2h-3zM108 2h2v3h-2zM294 28h3v5h-3zM133 -2h5v4h-5z"/><path fill="#e1e0d1" d="M76 29h2v2h-2zM164 27h4v2h-4zM19 30h4v4h-4zM204 33h2v3h-2zM271 30h2v2h-2zM76 51h2v2h-2zM29 50h4v5h-4zM48 0h4v3h-4zM91 -2h3v4h-3zM252 6h5v5h-5zM82 25h5v4h-5zM173 50h3v5h-3zM197 15h3v2h-3zM83 12h2v3h-2zM155 29h4v3h-4zM261 40h4v5h-4zM134 59h3v3h-3zM253 29h5v2h-5zM58 33h2v2h-2zM319 46h5v3h-5zM93 15h3v5h-3zM131 21h3v2h-3zM134 5h3v3h-3zM20 7h2v3h-2zM58 47h5v5h-5zM293 25h5v2h-5zM61 55h2v4h-2zM193 54h2v5h-2zM107 55h3v4h-3zM172 59h3v5h-3zM297 5h5v2h-5zM314 27h3v5h-3zM98 47h2v5h-2zM287 38h5v2h-5zM268 34h2v2h-2zM103 -2h3v3h-3zM146 27h4v4h-4zM104 -1h2v4h-2zM186 15h2v2h-2zM314 58h2v2h-2zM120 54h3v2h-3zM319 19h3v3h-3zM232 8h4v2h-4zM43 39h3v4h-3zM143 46h5v5h-5zM128 17h2v2h-2zM157 40h5v4h-5zM29 2h4v2h-4zM144 46h2v2h-2zM97 54h2v2h-2zM48 11h5v3h-5zM273 39h5v2h-5zM91 42h3v5h-3zM39 26h4v3h-4zM158 35h3v5h-3zM206 9h3v2h-3zM9 34h5v5h-5zM68 14h5v3h-5zM146 2h2v2h-2zM290 22h4v3h-4zM119 24h5v3h-5zM251 47h3v5h-3zM108 54h2v5h-2zM275 20h3v4h-3zM80 23h2v5h-2zM279 39h5v3h-5zM299 0h4v3h-4zM125 -2h2v2h-2zM176 18h2v4h-2zM214 22h2v5h-2zM121 46h5v3h-5zM230 37h2v5h-2zM156 23h3v5h-3zM241 31h3v5h-3zM33 37h2v2h-2zM24 0h5v2h-5zM195 28h5v5h-5zM64 45h5v2h-5zM313 18h5v2h-5zM172 41h5v5h-5zM-2 53h3v2h-3zM114 52h2v3h-2zM155 6h3v3h-3zM172 21h5v2h-5zM293 28h3v3h-3zM104 11h5v2h-5zM217 3h5v2h-5zM180 4h3v4h-3zM27 12h5v4h-5zM101 18h2v3h-2zM314 25h3v3h-3zM240 58h4v3h-4zM117 2h4v2h-4zM204 4h3v2h-3zM219 37h5v3h-5zM202 48h5v3h-5zM57 19h5v3h-5zM196 2h2v3h-2zM157 12h2v2h-2zM220 51h2v2h-2zM99 36h2v2h-2zM127 26h3v3h-3zM87 8h2v5h-2zM170 40h2v4h-2zM94 34h3v3h-3zM294 42h4v2h-4zM210 56h2v4h-2zM227 39h3v2h-3zM28 45h3v5h-3zM54 41h2v5h-2zM270 50h5v4h-5zM73 25h3v4h-3zM195 8h4v4h-4zM242 35h2v2h-2zM99 2h4v2h-4zM77 9h2v5h-2zM257 0h2v3h-2zM105 25h2v5h-2zM201 4h5v2h-5zM145 21h2v4h-2zM10 42h2v5h-2zM154 35h3v2h-3zM270 10h5v4h-5zM170 6h2v3h-2zM262 28h3v3h-3zM190 32h4v4h-4zM14 50h3v5h-3zM154 27h3v5h-3zM104 50h3v5h-3zM128 38h3v5h-3zM278 1h2v3h-2zM115 19h5v3h-5zM216 25h2v2h-2zM197 9h2v3h-2zM16 34h3v2h-3zM114 5h3v2h-3zM214 13h3v2h-3zM25 40h3v2h-3zM234 53h2v3h-2zM176 31h3v5h-3zM181 52h2v3h-2zM286 15h4v4h-4zM165 6h5v4h-5zM270 26h5v2h-5zM27 -1h2v3h-2zM99 32h4v3h-4zM120 53h3v4h-3zM275 27h2v3h-2zM110 15h3v2h-3zM66 42h4v2h-4zM180 23h2v4h-2zM78 42h2v5h-2zM132 29h3v2h-3zM234 12h2v3h-2zM56 46h5v3h-5zM9 12h5v3h-5zM23 33h3v2h-3zM149 -1h5v2h-5zM264 36h5v3h-5zM186 43h3v2h-3zM265 27h2v2h-2zM75 30h2v2h-2zM298 13h3v3h-3zM221 -1h2v4h-2zM151 33h4v3h-4zM147 44h4v4h-4zM215 10h3v3h-3zM200 10h3v4h-3zM157 36h3v3h-3zM106 28h4v4h-4zM227 16h2v2h-2zM234 15h2v4h-2zM288 41h2v3h-2zM131 40h3v5h-3zM42 24h3v4h-3zM298 24h2v2h-2zM249 24h3v5h-3zM250 59h3v5h-3zM191 35h2v4h-2zM275 31h2v3h-2zM293 27h2v3h-2zM82 49h2v5h-2zM7 31h3v3h-3zM76 49h2v2h-2zM1 17h2v3h-2zM52 3h2v3h-2zM57 -1h5v3h-5zM251 14h3v3h-3zM63 16h3v4h-3zM86 56h4v2h-4zM113 2h3v2h-3zM126 22h3v3h-3zM253 47h2v2h-2zM93 27h2v3h-2zM183 41h2v3h-2zM49 33h2v5h-2zM110 17h4v5h-4zM159 29h3v5h-3zM304 46h5v4h-5zM99 17h2v5h-2zM285 19h5v5h-5zM111 19h5v2h-5zM132 55h2v3h-2zM59 30h3v3h-3zM124 0h2v2h-2zM21 43h3v2h-3zM136 49h3v3h-3zM94 29h4v2h-4zM295 25h2v3h-2zM213 15h2v4h-2zM183 31h4v4h-4zM238 26h3v3h-3zM185 5h2v2h-2zM77 16h3v3h-3zM107 44h3v2h-3zM88 39h2v2h-2z"/><path fill="#b6b5a5" d="M102 10h3v2h-3zM81 49h3v4h-3zM151 45h5v4h-5zM57 2h4v5h-4zM94 35h3v2h-3zM192 29h5v2h-5zM315 18h3v2h-3zM67 52h5v2h-5zM273 13h2v5h-2zM130 37h2v5h-2zM211 7h2v3h-2zM90 27h5v5h-5zM143 5h3v3h-3zM69 52h2v3h-2zM275 39h5v5h-5zM61 39h3v5h-3zM71 36h4v2h-4zM91 -1h4v2h-4zM24 29h3v4h-3zM270 48h3v4h-3zM280 33h2v2h-2zM277 29h2v4h-2zM187 11h3v3h-3zM81 56h3v2h-3zM126 14h3v2h-3zM48 24h3v2h-3zM238 29h2v3h-2zM183 28h5v5h-5zM216 3h3v2h-3zM163 41h5v4h-5zM66 20h3v4h-3zM255 13h2v3h-2zM260 47h3v2h-3zM260 25h3v2h-3zM48 40h3v2h-3zM147 2h4v3h-4zM111 35h2v2h-2zM299 26h5v4h-5zM140 17h3v5h-3zM155 3h3v2h-3zM302 12h3v5h-3zM52 25h3v3h-3zM146 50h2v2h-2zM47 32h2v4h-2zM46 59h3v2h-3zM169 10h3v5h-3zM278 41h2v3h-2zM104 2h2v2h-2zM24 53h3v5h-3zM192 37h3v3h-3zM149 20h2v2h-2zM173 24h5v2h-5zM233 47h2v5h-2zM49 19h2v4h-2zM51 29h2v4h-2zM264 47h5v3h-5zM125 30h3v3h-3zM263 19h2v5h-2z"/><path fill="#a7a696" d="M169 3h2v3h-2zM213 33h4v2h-4zM239 29h2v3h-2zM51 46h2v3h-2zM86 26h5v5h-5zM59 43h3v2h-3zM249 41h4v5h-4zM136 12h3v3h-3zM43 59h2v3h-2zM305 35h4v2h-4zM60 44h3v3h-3zM303 6h5v2h-5zM311 17h2v2h-2zM123 43h3v3h-3zM11 1h5v2h-5zM19 12h3v3h-3zM252 5h4v2h-4zM276 10h2v2h-2zM139 8h3v5h-3zM201 36h3v4h-3zM223 17h2v2h-2zM223 58h2v3h-2zM100 32h3v3h-3zM92 28h2v3h-2zM46 48h3v5h-3zM44 43h2v2h-2zM111 19h3v2h-3zM209 43h4v2h-4zM8 27h2v3h-2zM226 46h2v4h-2zM226 0h3v5h-3zM191 3h3v5h-3zM188 17h3v3h-3z"/><path fill="#b6b5a5" d="M93 2h5v3h-5zM166 36h2v4h-2zM97 40h5v2h-5zM247 52h4v3h-4zM212 17h2v4h-2zM211 -1h2v3h-2zM118 9h3v3h-3zM229 33h5v2h-5zM234 38h2v5h-2zM96 32h5v4h-5zM286 53h2v2h-2zM16 44h2v3h-2zM291 29h3v5h-3zM135 27h5v2h-5zM223 54h4v4h-4zM172 -1h5v2h-5zM258 13h2v2h-2zM77 29h2v2h-2zM20 16h4v3h-4zM107 51h3v2h-3zM4 11h5v3h-5zM146 30h3v3h-3zM129 30h3v2h-3zM228 40h3v4h-3zM304 14h2v3h-2zM203 56h3v5h-3zM283 9h5v3h-5zM280 33h2v4h-2zM177 58h2v2h-2zM230 38h3v2h-3zM239 -1h2v2h-2zM97 35h5v3h-5zM70 6h3v2h-3zM75 24h4v2h-4zM70 56h3v3h-3zM282 17h4v4h-4zM2 31h5v3h-5zM252 23h4v5h-4zM233 38h2v5h-2zM23 57h4v5h-4zM261 6h3v2h-3zM154 55h5v2h-5zM242 34h2v3h-2zM313 23h5v3h-5zM7 19h4v2h-4zM69 48h3v2h-3zM120 2h4v3h-4z"/><path fill="#e1e0d1" d="M53 50h2v2h-2zM218 10h5v4h-5zM163 16h2v4h-2zM177 34h4v3h-4zM262 30h5v5h-5zM7 39h3v2h-3zM62 17h3v2h-3zM280 13h4v3h-4zM61 21h3v5h-3zM282 35h3v4h-3zM116 41h3v2h-3zM120 12h5v2h-5zM203 15h3v2h-3zM303 44h4v3h-4zM248 53h2v5h-2zM178 56h2v4h-2zM285 39h4v3h-4zM164 59h3v3h-3zM125 59h2v2h-2zM16 40h4v2h-4zM8 16h4v3h-4zM262 59h4v5h-4zM2 3h4v5h-4zM99 42h4v3h-4zM170 24h2v2h-2zM196 34h3v5h-3zM313 0h5v2h-5zM315 31h5v2h-5zM200 13h4v3h-4zM109 32h2v3h-2zM1 32h3v2h-3zM275 41h2v4h-2zM211 12h2v5h-2zM51 47h4v2h-4zM269 59h4v3h-4zM151 46h5v2h-5zM209 43h3v3h-3zM139 31h3v4h-3zM142 7h2v3h-2zM65 59h2v2h-2zM202 19h3v2h-3zM186 10h3v4h-3zM246 15h2v2h-2zM57 58h5v4h-5zM82 56h3v5h-3zM174 17h5v4h-5zM235 2h2v3h-2zM83 4h2v3h-2zM191 48h3v4h-3zM51 12h2v2h-2zM36 47h3v2h-3zM226 51h4v5h-4zM42 5h3v5h-3zM168 53h4v2h-4zM291 14h2v3h-2zM170 55h2v2h-2zM90 36h4v2h-4zM191 32h3v3h-3zM295 56h3v2h-3zM296 51h2v2h-2zM120 20h3v3h-3zM188 13h2v3h-2zM80 22h5v3h-5zM-1 18h3v3h-3zM189 42h3v2h-3zM191 57h4v4h-4zM151 43h3v5h-3zM32 46h5v3h-5zM9 41h4v5h-4zM248 52h3v2h-3zM3 24h2v3h-2zM290 41h4v2h-4zM130 51h2v3h-2zM235 46h4v2h-4zM305 52h3v2h-3zM293 38h2v2h-2zM67 58h2v3h-2zM212 18h3v5h-3zM278 57h5v2h-5zM271 5h3v4h-3zM73 20h2v3h-2zM294 46h5v5h-5zM144 37h2v3h-2zM250 15h5v4h-5zM261 28h3v2h-3zM256 -1h2v4h-2zM20 23h3v5h-3zM282 36h4v4h-4zM316 53h5v4h-5zM11 33h3v4h-3zM305 9h4v4h-4zM227 24h5v2h-5zM4 24h3v3h-3zM87 40h4v3h-4zM308 31h4v2h-4zM97 46h2v2h-2zM106 20h5v2h-5zM144 30h2v3h-2zM69 12h4v3h-4zM259 7h5v2h-5zM130 29h4v5h-4zM274 41h2v2h-2zM221 11h3v3h-3zM66 3h4v2h-4zM309 59h3v4h-3zM270 14h5v4h-5zM232 -2h4v2h-4zM144 20h3v3h-3zM123 44h3v3h-3zM254 57h4v5h-4zM172 56h2v3h-2zM8 33h2v2h-2zM78 9h2v5h-2zM140 42h2v3h-2zM236 44h2v4h-2zM10 10h4v5h-4zM199 -1h2v3h-2zM303 6h4v4h-4zM292 31h2v3h-2zM264 5h2v2h-2zM22 36h5v3h-5zM122 37h5v2h-5zM87 17h4v2h-4zM165 47h2v2h-2zM4 31h2v2h-2zM36 34h2v2h-2zM227 29h4v5h-4zM3 42h3v3h-3zM90 49h3v5h-3zM165 4h2v3h-2zM60 26h2v2h-2zM128 10h3v2h-3zM174 4h3v3h-3zM260 36h2v5h-2zM144 23h3v3h-3zM246 6h2v2h-2zM156 57h3v4h-3zM188 5h5v3h-5zM64 21h2v3h-2zM225 51h2v4h-2zM184 48h2v3h-2zM232 57h2v3h-2zM193 58h5v2h-5zM115 -2h2v3h-2zM36 39h2v4h-2zM247 22h5v3h-5zM76 24h3v3h-3zM253 48h2v3h-2zM107 17h2v3h-2zM52 17h2v2h-2zM86 26h4v5h-4zM169 2h3v5h-3zM48 8h2v5h-2zM42 53h5v2h-5zM230 35h2v5h-2zM242 12h2v5h-2zM116 33h2v3h-2zM132 29h5v3h-5zM57 45h4v4h-4zM26 2h5v4h-5zM87 32h2v2h-2zM162 33h3v2h-3zM159 52h4v2h-4zM217 -1h2v5h-2zM282 53h3v4h-3zM40 30h4v3h-4zM315 28h4v2h-4zM122 49h4v5h-4zM247 6h2v5h-2zM169 2h2v2h-2zM87 7h3v3h-3zM41 28h5v4h-5zM281 52h2v2h-2zM73 22h2v4h-2zM287 59h3v2h-3zM156 4h4v4h-4zM3 34h2v2h-2zM143 39h5v2h-5zM153 8h4v2h-4zM93 24h3v3h-3zM173 49h5v2h-5zM236 52h4v3h-4zM112 -2h3v2h-3zM19 31h3v3h-3zM207 23h5v4h-5zM112 34h5v2h-5zM22 22h5v2h-5zM103 51h2v3h-2zM319 26h3v3h-3zM220 16h5v2h-5zM36 20h2v4h-2zM13 -2h3v5h-3zM46 42h3v2h-3zM32 6h5v5h-5zM28 50h4v3h-4zM220 55h3v3h-3zM318 12h3v3h-3zM188 57h2v3h-2zM159 57h3v3h-3zM227 4h2v3h-2zM206 24h3v2h-3zM183 30h4v2h-4zM33 9h2v3h-2z"/><path fill="#a7a696" d="M304 13h3v3h-3zM263 19h4v3h-4zM41 52h4v2h-4zM220 18h2v3h-2zM32 47h3v2h-3zM87 18h2v2h-2zM-2 44h4v3h-4zM35 5h5v2h-5zM222 26h2v2h-2zM124 30h2v2h-2zM86 48h2v3h-2zM162 1h3v2h-3zM79 36h3v2h-3zM107 22h5v5h-5zM311 5h2v2h-2zM147 59h4v3h-4zM91 41h5v2h-5zM214 38h2v3h-2zM17 56h2v2h-2zM66 49h4v4h-4zM212 9h4v5h-4zM169 10h4v3h-4zM183 29h3v3h-3zM166 -1h3v4h-3zM64 25h2v3h-2zM77 19h5v3h-5zM151 48h2v2h-2zM231 24h5v3h-5zM261 54h2v5h-2zM21 -1h4v3h-4zM26 46h2v4h-2zM296 3h5v3h-5zM162 21h2v4h-2zM218 3h5v2h-5zM141 15h2v5h-2zM55 30h4v3h-4z"/><path fill="#d1d0bf" d="M25 42h3v3h-3zM58 23h3v3h-3zM306 1h2v2h-2zM77 32h3v5h-3zM272 33h5v2h-5zM49 9h4v2h-4zM231 27h5v2h-5zM153 18h2v3h-2zM269 23h5v5h-5zM125 4h2v2h-2zM304 49h2v4h-2zM170 28h2v2h-2zM288 -1h3v3h-3zM117 14h3v3h-3zM70 9h3v3h-3zM34 32h4v3h-4zM36 38h3v2h-3zM121 40h2v2h-2zM311 41h2v2h-2zM112 36h3v3h-3zM124 26h5v2h-5zM62 10h4v5h-4zM53 -1h4v5h-4zM175 25h3v2h-3zM294 35h3v4h-3zM302 29h3v5h-3zM140 7h2v2h-2zM161 39h3v5h-3zM273 56h5v2h-5zM111 45h3v3h-3zM133 43h3v3h-3zM256 48h2v3h-2zM77 14h3v3h-3zM204 -2h2v3h-2zM48 43h4v3h-4zM23 3h2v2h-2zM27 21h4v3h-4zM193 36h3v4h-3zM233 35h2v5h-2zM174 5h2v2h-2zM82 10h2v4h-2zM165 9h4v4h-4zM21 55h2v3h-2zM213 17h4v3h-4zM244 49h4v3h-4zM91 2h4v4h-4zM187 31h3v4h-3zM244 52h2v3h-2zM213 4h3v4h-3zM18 20h5v3h-5zM208 38h5v3h-5zM189 5h3v3h-3zM77 33h2v5h-2zM116 11h2v2h-2zM15 6h2v4h-2zM60 23h2v2h-2zM200 16h4v3h-4zM189 46h2v2h-2zM92 42h2v3h-2zM71 0h2v4h-2zM264 -2h2v5h-2zM35 0h2v2h-2zM118 34h3v2h-3zM205 35h2v5h-2zM277 15h2v2h-2zM314 21h2v3h-2zM291 8h3v3h-3zM96 46h2v4h-2zM164 49h2v2h-2zM304 21h2v3h-2zM68 5h3v2h-3zM217 5h2v2h-2zM65 43h3v3h-3zM124 18h3v2h-3zM133 13h5v3h-5zM257 45h5v2h-5zM262 27h5v3h-5zM108 54h3v5h-3zM142 24h4v2h-4zM258 35h2v2h-2zM169 46h2v3h-2zM299 27h2v2h-2zM109 13h2v4h-2zM134 47h2v2h-2zM263 52h3v4h-3zM159 57h4v2h-4zM273 57h3v2h-3zM314 41h3v3h-3zM128 26h4v3h-4zM162 39h2v5h-2zM28 46h3v2h-3zM162 32h5v2h-5zM193 17h5v3h-5zM81 31h2v3h-2zM170 58h2v5h-2zM40 24h3v4h-3zM115 29h5v2h-5zM184 27h3v2h-3zM213 42h5v2h-5zM2 41h5v3h-5zM290 0h3v4h-3zM250 35h2v3h-2zM91 3h5v2h-5zM92 -2h5v5h-5zM132 36h2v3h-2zM95 45h3v5h-3zM210 41h5v4h-5zM160 20h3v2h-3zM179 56h2v2h-2zM120 39h5v2h-5zM268 10h2v3h-2zM193 12h2v5h-2zM41 6h4v2h-4zM73 36h5v3h-5zM105 20h2v3h-2zM143 16h5v3h-5zM36 41h5v3h-5zM9 52h3v5h-3zM17 39h3v5h-3zM57 43h2v5h-2zM145 28h5v5h-5zM10 21h4v5h-4zM286 8h5v5h-5zM246 23h4v4h-4zM191 15h3v3h-3zM304 40h2v2h-2zM163 34h3v3h-3zM236 30h5v5h-5zM166 28h2v5h-2zM142 25h3v2h-3zM265 53h4v3h-4zM44 51h2v2h-2zM111 45h4v4h-4zM93 55h3v4h-3zM92 53h5v3h-5zM237 4h3v2h-3zM183 19h2v5h-2zM133 5h2v2h-2zM39 6h2v4h-2zM86 29h5v3h-5zM223 31h3v2h-3zM169 6h4v2h-4zM283 22h3v3h-3zM243 10h3v4h-3zM62 34h2v4h-2zM109 27h3v3h-3zM122 46h4v5h-4zM281 9h3v3h-3zM204 3h5v3h-5z"/><path fill="#e8e7d9" d="M56 34h4v5h-4zM150 43h3v4h-3zM117 47h4v2h-4zM281 9h4v2h-4zM261 28h3v4h-3zM295 27h5v3h-5zM257 41h5v2h-5zM66 26h3v2h-3zM160 1h3v3h-3zM159 54h2v5h-2zM24 12h2v2h-2zM238 2h2v2h-2zM310 36h3v3h-3zM271 -1h3v3h-3zM71 59h3v2h-3zM292 1h4v4h-4zM217 10h4v3h-4zM276 6h2v5h-2zM87 43h3v4h-3zM184 18h2v4h-2zM239 42h2v3h-2zM92 32h3v3h-3zM191 41h3v3h-3zM34 17h3v2h-3zM-2 23h5v3h-5zM219 10h2v4h-2zM164 36h2v2h-2zM288 35h4v3h-4zM116 17h3v5h-3zM37 3h4v3h-4zM61 29h3v4h-3zM65 52h5v5h-5zM163 7h3v3h-3zM245 55h5v2h-5zM285 5h4v3h-4zM191 31h4v4h-4zM271 58h2v3h-2zM73 23h2v2h-2zM112 28h3v3h-3zM129 52h3v3h-3zM23 51h3v2h-3zM134 27h2v3h-2zM238 -2h3v2h-3zM31 46h3v2h-3zM274 30h4v2h-4zM3 59h4v5h-4zM262 0h3v4h-3zM45 16h3v5h-3zM316 -1h4v5h-4zM213 28h4v5h-4zM14 27h3v3h-3zM125 46h3v3h-3zM315 30h2v5h-2zM264 51h3v3h-3zM1 5h5v3h-5zM70 47h5v2h-5zM154 4h2v3h-2zM236 29h4v4h-4zM258 56h2v3h-2zM35 41h2v3h-2zM181 16h2v2h-2zM165 11h3v4h-3zM244 32h2v3h-2zM165 44h2v3h-2zM217 24h5v4h-5zM91 27h2v2h-2zM223 45h5v4h-5zM260 14h3v3h-3zM265 9h5v3h-5zM235 12h4v4h-4zM58 58h3v2h-3zM235 36h2v2h-2zM319 46h5v3h-5zM145 59h3v4h-3zM103 20h2v2h-2zM259 51h2v3h-2zM109 18h2v2h-2zM169 37h5v2h-5zM133 43h2v3h-2zM139 42h3v5h-3zM3 5h4v3h-4zM209 4h5v3h-5zM5 33h3v2h-3zM274 52h5v2h-5zM77 50h3v4h-3zM311 17h2v5h-2zM239 0h3v2h-3zM316 9h5v5h-5zM232 54h4v5h-4zM187 6h3v2h-3zM300 39h2v4h-2zM280 44h2v2h-2zM76 2h2v3h-2zM19 0h3v5h-3zM56 7h5v5h-5zM196 26h5v2h-5zM252 39h5v4h-5zM3 22h3v3h-3zM171 42h3v4h-3zM192 43h2v2h-2zM113 50h2v3h-2zM282 29h5v3h-5zM263 36h5v3h-5zM296 6h5v4h-5zM246 4h2v2h-2zM181 12h2v4h-2zM170 47h2v3h-2zM108 10h3v3h-3zM136 31h2v4h-2zM-1 29h4v3h-4zM219 5h2v5h-2zM290 50h3v3h-3zM233 18h2v4h-2zM161 31h4v3h-4zM319 19h5v2h-5zM34 41h5v4h-5zM156 28h2v3h-2zM147 44h3v2h-3zM196 9h5v4h-5zM179 47h4v3h-4zM213 37h2v3h-2zM141 9h5v4h-5zM297 51h2v2h-2zM183 56h2v3h-2zM58 36h4v2h-4zM296 52h4v5h-4zM44 50h3v3h-3zM23 14h2v3h-2zM282 42h2v3h-2zM46 23h2v2h-2zM46 18h5v5h-5zM215 5h2v2h-2zM55 8h2v3h-2zM185 2h5v2h-5zM160 7h3v2h-3zM288 48h2v3h-2zM168 42h5v3h-5zM264 52h2v3h-2zM146 -2h2v2h-2zM53 35h4v5h-4zM30 23h2v2h-2zM256 9h5v5h-5zM16 21h3v4h-3zM161 49h5v2h-5zM256 33h3v4h-3zM271 26h3v4h-3zM318 46h2v3h-2zM243 15h5v2h-5zM224 19h2v4h-2zM258 58h3v3h-3zM100 33h3v3h-3zM214 49h5v3h-5zM56 6h3v2h-3zM217 19h5v4h-5zM95 26h3v2h-3zM146 34h4v2h-4zM197 10h4v4h-4zM164 43h3v3h-3zM284 31h4v5h-4zM299 9h5v3h-5z"/><path fill="#dad9ca" d="M130 53h2v4h-2zM135 13h3v3h-3zM288 14h4v2h-4zM162 53h2v3h-2zM268 16h2v2h-2zM208 56h4v2h-4zM201 59h5v4h-5zM62 41h3v3h-3zM225 56h5v2h-5zM294 17h4v3h-4zM218 2h5v2h-5zM62 32h4v3h-4zM84 28h5v4h-5zM18 4h3v3h-3zM30 27h2v4h-2zM110 57h5v3h-5zM108 24h2v3h-2zM193 54h4v4h-4zM186 1h3v2h-3zM268 39h2v4h-2zM126 24h5v3h-5zM92 24h3v3h-3zM119 13h3v3h-3zM112 4h2v2h-2zM93 57h3v3h-3zM305 55h4v2h-4zM251 25h3v4h-3zM213 45h3v4h-3zM316 42h2v5h-2zM235 18h5v5h-5zM171 38h2v5h-2zM133 59h2v3h-2zM164 6h5v2h-5zM39 55h5v2h-5zM57 8h3v2h-3zM99 14h3v3h-3zM215 48h3v2h-3zM300 57h2v2h-2zM46 34h2v5h-2zM287 25h5v3h-5zM20 26h3v5h-3zM238 8h4v2h-4zM51 29h3v3h-3zM232 -1h4v2h-4zM209 29h3v3h-3zM297 34h4v3h-4zM211 39h3v3h-3zM252 53h2v4h-2zM260 56h2v4h-2zM118 14h3v2h-3zM122 36h5v3h-5zM64 -2h2v2h-2zM271 36h3v3h-3zM170 37h5v3h-5zM317 -1h2v2h-2zM71 29h4v5h-4zM78 16h2v2h-2zM259 54h3v4h-3zM139 36h5v3h-5zM295 2h4v5h-4zM184 30h2v5h-2zM261 45h3v4h-3zM223 33h4v2h-4zM267 42h4v3h-4zM72 31h2v2h-2zM20 1h3v3h-3zM21 39h2v5h-2zM29 58h4v3h-4zM151 56h3v2h-3zM231 35h3v2h-3zM68 25h3v3h-3zM190 9h5v2h-5zM40 43h2v4h-2zM283 0h3v5h-3zM306 1h5v3h-5zM197 42h3v2h-3zM216 58h2v5h-2zM246 51h4v2h-4zM16 54h2v2h-2zM54 32h5v4h-5zM188 4h3v3h-3zM169 37h2v2h-2zM117 51h3v4h-3zM226 17h2v4h-2zM75 2h2v2h-2zM8 46h4v5h-4zM190 14h2v4h-2zM75 8h4v5h-4zM64 20h4v3h-4zM242 30h3v2h-3zM135 15h2v5h-2zM55 43h2v5h-2zM314 29h5v3h-5zM90 40h5v4h-5zM144 14h2v2h-2zM150 49h2v2h-2zM159 46h2v3h-2zM272 22h2v4h-2zM30 4h3v5h-3zM273 49h3v2h-3zM145 17h4v3h-4zM255 -2h2v2h-2zM303 49h4v2h-4zM297 4h5v2h-5zM149 41h2v5h-2zM104 35h4v4h-4zM74 11h5v5h-5zM294 1h5v4h-5zM177 21h3v3h-3zM198 56h5v3h-5zM183 42h3v5h-3zM182 54h2v4h-2zM94 33h3v2h-3zM62 3h2v4h-2zM290 9h2v2h-2zM72 46h3v5h-3zM4 59h3v2h-3zM277 19h2v5h-2zM110 53h2v2h-2zM-2 3h3v5h-3zM18 3h2v3h-2zM121 32h3v2h-3zM10 36h3v5h-3zM151 31h5v3h-5zM202 50h2v2h-2zM212 58h5v3h-5zM171 14h3v5h-3zM267 20h4v2h-4zM267 51h4v2h-4zM28 50h3v3h-3zM296 4h2v4h-2zM96 15h2v3h-2zM23 46h4v2h-4zM146 26h4v5h-4zM55 14h2v4h-2zM77 19h5v3h-5zM268 7h5v3h-5zM202 39h4v2h-4zM135 56h2v3h-2zM198 1h5v5h-5zM173 34h2v5h-2zM82 26h2v3h-2zM315 16h3v3h-3zM21 21h2v4h-2zM32 45h5v2h-5zM149 21h5v4h-5zM301 26h5v3h-5zM241 34h3v3h-3zM243 19h5v5h-5zM183 44h4v2h-4zM109 36h4v2h-4zM248 49h4v3h-4zM19 22h2v2h-2zM165 17h4v5h-4zM183 49h5v2h-5zM269 39h3v2h-3zM147 0h4v2h-4zM286 41h3v3h-3zM122 5h4v4h-4zM199 57h3v3h-3zM266 29h5v3h-5zM162 11h2v4h-2zM127 26h5v2h-5zM221 0h2v3h-2zM41 25h2v5h-2zM255 15h2v3h-2zM140 6h2v5h-2zM246 36h3v3h-3zM226 30h5v2h-5zM279 28h3v2h-3zM18 11h3v5h-3zM73 38h5v2h-5zM319 31h2v2h-2zM242 31h2v4h-2zM147 23h3v5h-3zM264 46h3v3h-3zM282 30h3v2h-3zM216 18h2v4h-2zM187 14h5v5h-5zM217 11h2v2h-2zM204 9h3v3h-3zM119 46h4v5h-4zM277 10h2v4h-2zM243 56h5v3h-5zM222 29h5v5h-5zM10 45h2v2h-2zM291 3h2v2h-2zM179 2h3v4h-3zM55 11h2v5h-2zM88 25h5v5h-5zM21 17h5v5h-5zM220 36h2v3h-2zM126 25h3v3h-3zM162 42h2v3h-2zM10 40h3v2h-3zM307 31h3v5h-3zM65 51h3v3h-3zM83 54h5v2h-5zM260 5h5v5h-5zM277 25h5v3h-5zM207 20h3v4h-3zM54 36h4v3h-4zM256 24h2v2h-2zM227 30h2v5h-2zM295 12h4v3h-4zM142 15h3v5h-3zM122 31h2v2h-2z"/><path fill="#c5c4b3" d="M230 0h4v3h-4zM148 50h2v3h-2zM34 49h3v2h-3zM317 49h5v3h-5zM191 32h2v2h-2zM268 52h2v2h-2zM247 57h4v5h-4zM1 43h3v5h-3zM248 33h5v5h-5zM93 38h4v3h-4zM171 19h4v2h-4zM114 20h2v2h-2zM78 51h4v2h-4zM266 24h3v2h-3zM44 48h5v3h-5zM197 3h3v2h-3zM245 -2h3v2h-3zM291 53h2v2h-2zM266 47h5v2h-5zM201 26h2v4h-2zM301 36h2v5h-2zM287 2h4v4h-4zM58 47h3v2h-3zM118 30h3v3h-3zM147 36h3v2h-3zM74 -1h3v2h-3zM12 32h2v4h-2zM262 14h2v2h-2zM71 9h3v3h-3zM156 16h2v5h-2zM148 51h5v3h-5zM237 50h2v4h-2zM283 9h5v5h-5zM196 21h2v3h-2zM172 12h2v5h-2zM250 25h2v5h-2zM30 53h2v3h-2zM219 -1h3v2h-3zM292 35h3v3h-3zM139 0h3v4h-3zM20 22h4v4h-4zM243 7h3v2h-3zM238 21h3v3h-3zM237 46h2v3h-2zM158 44h2v2h-2zM284 0h5v3h-5zM291 57h2v3h-2zM35 8h4v3h-4zM34 49h3v2h-3zM131 29h4v2h-4zM36 44h3v4h-3zM123 42h2v4h-2zM66 15h3v5h-3zM159 39h5v3h-5zM257 59h5v4h-5zM142 15h3v3h-3zM182 -1h2v2h-2zM62 56h3v2h-3zM106 22h3v3h-3zM190 31h5v3h-5zM71 28h3v5h-3zM10 51h3v3h-3zM193 37h2v2h-2zM276 16h2v2h-2zM65 57h2v2h-2zM199 3h2v4h-2zM8 54h5v2h-5zM227 51h2v4h-2zM127 9h3v2h-3zM183 33h2v3h-2zM103 51h4v3h-4zM218 -1h5v2h-5zM45 23h5v5h-5zM116 51h3v4h-3zM310 7h2v3h-2zM83 7h3v2h-3zM238 12h5v2h-5zM214 44h3v3h-3zM44 7h3v3h-3zM285 8h5v3h-5zM191 -2h2v3h-2zM30 57h3v4h-3zM119 44h3v5h-3zM206 20h4v4h-4zM87 -2h3v4h-3zM291 48h2v3h-2zM51 6h3v5h-3zM170 25h3v3h-3zM261 23h2v5h-2zM228 53h4v2h-4zM79 3h2v3h-2zM257 -2h3v3h-3zM83 27h2v3h-2zM143 21h4v2h-4zM276 32h3v2h-3zM196 -2h3v2h-3zM38 34h5v4h-5zM52 37h3v2h-3zM39 55h2v3h-2zM268 56h3v2h-3zM235 24h4v5h-4zM74 49h2v2h-2zM211 6h4v3h-4zM48 43h3v3h-3zM22 12h3v4h-3zM31 15h5v2h-5zM51 35h2v2h-2zM249 55h3v5h-3zM50 0h5v5h-5zM308 41h3v3h-3zM-2 28h2v5h-2zM123 41h4v4h-4z"/><path fill="#d1d0bf" d="M151 13h4v2h-4zM191 4h2v4h-2zM69 38h3v2h-3zM163 36h5v3h-5zM279 1h3v5h-3zM138 6h4v2h-4zM233 47h2v3h-2zM41 8h2v3h-2zM0 22h3v3h-3zM270 24h2v3h-2zM227 5h3v2h-3zM126 27h2v5h-2zM250 52h3v3h-3zM239 0h2v2h-2zM290 26h3v5h-3zM267 39h3v2h-3zM112 34h2v2h-2zM259 40h5v4h-5zM118 35h2v3h-2zM60 12h2v2h-2zM248 30h4v4h-4zM256 8h4v3h-4zM229 57h2v2h-2zM307 5h2v4h-2zM172 5h4v2h-4zM274 40h3v3h-3zM185 59h3v5h-3zM266 40h2v2h-2zM122 2h3v2h-3zM87 23h5v4h-5zM264 18h2v3h-2zM195 17h5v3h-5zM201 57h2v2h-2zM160 48h2v4h-2zM189 1h5v3h-5zM124 12h4v2h-4zM248 32h2v3h-2zM5 2h2v3h-2zM64 36h3v4h-3zM72 11h2v2h-2zM37 3h3v5h-3zM162 9h2v3h-2zM85 -2h5v3h-5zM40 10h3v2h-3zM75 34h2v4h-2zM151 9h4v2h-4zM170 6h5v3h-5zM280 40h3v3h-3zM178 49h3v3h-3zM18 -1h4v5h-4zM174 3h2v3h-2zM205 7h3v4h-3zM221 55h2v2h-2zM265 3h5v4h-5zM65 26h3v3h-3zM291 39h4v2h-4zM247 51h4v2h-4zM172 42h4v2h-4zM73 55h2v2h-2zM100 54h3v3h-3zM252 41h3v5h-3zM183 21h2v5h-2zM141 12h5v5h-5zM316 49h4v4h-4zM186 43h3v3h-3zM195 58h2v2h-2zM16 34h2v3h-2zM5 14h2v3h-2zM214 35h2v2h-2zM145 55h5v3h-5zM200 34h5v3h-5zM88 4h2v3h-2zM101 0h3v5h-3zM283 10h3v3h-3zM73 30h4v5h-4zM146 49h5v5h-5zM-2 24h2v3h-2zM275 53h3v5h-3zM22 -2h2v3h-2zM299 43h2v2h-2zM83 11h2v4h-2zM49 25h2v2h-2zM172 40h3v2h-3zM67 18h4v2h-4zM177 34h3v4h-3zM285 23h3v3h-3zM81 3h3v4h-3zM9 7h3v5h-3zM142 53h2v2h-2zM68 52h4v2h-4zM230 5h4v3h-4zM282 46h3v2h-3zM263 23h5v5h-5zM264 5h5v3h-5zM177 0h5v2h-5zM84 45h2v3h-2zM235 -2h3v3h-3zM104 28h2v3h-2zM286 6h2v2h-2zM199 31h4v3h-4zM202 29h5v3h-5zM71 36h2v2h-2zM17 33h4v5h-4zM44 8h2v3h-2zM259 32h5v3h-5zM219 10h3v2h-3zM213 13h2v3h-2zM64 52h3v2h-3zM204 44h3v2h-3zM117 53h3v2h-3zM5 25h4v4h-4zM107 57h5v2h-5zM315 15h4v3h-4zM284 38h3v2h-3zM245 58h5v2h-5zM47 47h3v2h-3zM185 8h5v4h-5zM110 9h2v5h-2zM35 13h2v2h-2zM69 31h2v2h-2zM53 7h2v5h-2zM51 0h2v4h-2zM26 6h2v5h-2zM57 48h2v4h-2zM236 19h4v5h-4zM130 27h3v3h-3zM267 21h4v3h-4zM53 25h2v5h-2zM56 48h4v3h-4zM22 14h2v3h-2zM214 51h2v2h-2zM129 28h2v2h-2zM11 25h3v2h-3zM153 21h3v3h-3zM58 37h3v4h-3zM243 48h2v2h-2zM4 25h3v3h-3zM272 53h2v2h-2zM294 41h2v5h-2zM120 19h5v3h-5zM14 38h3v5h-3zM126 9h3v2h-3zM114 9h3v5h-3zM45 48h2v2h-2zM313 46h4v3h-4zM193 3h3v5h-3z"/><path fill="#dad9ca" d="M4 33h2v2h-2zM249 10h4v3h-4zM7 25h2v5h-2zM138 50h3v5h-3zM110 32h5v2h-5zM85 46h2v5h-2zM187 -1h5v3h-5zM278 51h5v5h-5zM69 53h5v5h-5zM111 59h4v4h-4zM154 41h4v2h-4zM277 29h2v5h-2zM58 53h3v2h-3zM80 36h3v3h-3zM7 34h3v3h-3zM67 18h4v3h-4zM21 20h2v5h-2zM294 42h3v3h-3zM249 14h3v3h-3zM58 3h2v3h-2zM112 38h4v2h-4zM91 33h4v2h-4zM249 51h3v2h-3zM263 11h5v2h-5zM182 41h3v5h-3zM34 43h2v3h-2zM265 39h4v3h-4zM24 52h5v3h-5zM109 50h2v5h-2zM300 50h2v4h-2zM10 24h3v3h-3zM34 35h4v4h-4zM154 20h4v2h-4zM299 2h3v2h-3zM25 49h2v2h-2zM200 55h3v3h-3zM151 14h3v5h-3zM194 52h2v3h-2zM251 31h5v3h-5zM90 47h4v2h-4zM152 25h5v3h-5zM48 52h5v5h-5zM181 17h3v3h-3zM230 42h4v3h-4zM107 38h3v5h-3zM76 27h2v5h-2zM106 57h2v3h-2zM221 23h3v4h-3zM242 40h4v3h-4zM2 44h2v2h-2zM202 34h2v3h-2zM272 44h2v2h-2zM192 38h3v3h-3zM34 38h3v5h-3zM23 13h3v2h-3zM146 16h3v2h-3zM69 0h5v3h-5zM144 34h2v2h-2zM144 50h5v3h-5zM105 22h4v2h-4zM61 52h5v2h-5zM163 6h5v3h-5zM298 25h3v4h-3zM63 9h4v5h-4zM308 43h2v4h-2zM122 11h5v4h-5zM117 4h4v5h-4zM293 29h4v2h-4zM260 42h3v2h-3zM124 49h2v2h-2zM232 9h2v3h-2zM83 20h5v4h-5zM169 20h3v2h-3zM280 58h3v3h-3zM180 10h2v3h-2zM209 54h3v2h-3zM57 22h4v3h-4zM245 23h2v3h-2zM261 45h5v2h-5zM141 56h3v4h-3zM172 17h2v5h-2zM218 11h3v3h-3zM143 48h5v2h-5zM302 41h2v4h-2zM313 40h2v2h-2zM302 52h3v4h-3zM96 55h5v3h-5zM164 30h2v3h-2zM151 55h4v3h-4zM159 37h3v4h-3zM255 20h4v2h-4zM164 13h2v3h-2zM65 9h2v3h-2zM173 18h3v2h-3zM137 26h3v3h-3zM192 4h2v4h-2zM125 54h3v2h-3zM16 13h2v3h-2zM243 15h2v2h-2zM203 32h5v3h-5zM99 9h3v2h-3zM104 57h3v2h-3zM88 37h4v4h-4zM193 42h5v5h-5zM121 22h4v5h-4zM138 43h3v2h-3zM70 50h3v2h-3zM38 22h3v2h-3zM2 53h3v3h-3zM87 48h4v5h-4zM22 3h3v3h-3zM48 57h4v4h-4zM125 43h2v4h-2zM85 43h5v3h-5zM44 8h2v3h-2zM294 14h3v2h-3zM282 54h5v2h-5zM271 9h3v3h-3zM19 25h3v3h-3zM253 46h2v2h-2zM110 26h2v4h-2zM142 15h2v4h-2zM163 58h2v2h-2zM183 37h4v2h-4zM258 59h5v3h-5zM6 21h2v5h-2zM130 34h4v2h-4zM15 27h3v3h-3zM236 2h2v2h-2zM23 56h5v2h-5zM201 23h3v2h-3zM104 58h2v5h-2zM59 11h3v2h-3zM117 55h4v2h-4zM315 48h3v5h-3zM176 57h3v2h-3zM215 56h4v4h-4zM56 12h3v4h-3zM215 56h4v2h-4zM226 36h5v2h-5zM146 59h3v3h-3zM130 32h3v5h-3zM66 49h2v3h-2zM255 47h2v2h-2zM238 2h3v4h-3zM280 18h2v2h-2zM161 18h2v4h-2zM83 23h2v3h-2zM271 49h2v3h-2zM173 54h5v2h-5zM72 51h3v4h-3zM75 17h3v3h-3zM289 9h5v5h-5zM39 32h3v2h-3zM154 20h5v3h-5zM217 28h3v3h-3zM183 8h4v2h-4zM124 49h5v2h-5zM282 18h4v3h-4zM94 46h4v3h-4zM303 -1h5v2h-5zM277 52h2v3h-2zM120 7h4v3h-4zM51 34h3v2h-3zM204 53h4v5h-4zM193 34h3v3h-3zM125 27h3v4h-3zM95 39h3v3h-3zM18 41h3v2h-3zM311 30h5v2h-5zM10 14h2v3h-2zM203 10h2v5h-2zM83 51h3v3h-3zM57 29h5v2h-5zM297 46h5v2h-5zM32 57h5v4h-5zM24 5h2v2h-2zM218 45h2v3h-2zM27 -1h2v4h-2zM39 0h2v5h-2zM247 58h2v4h-2zM45 36h3v5h-3zM306 45h4v5h-4zM268 45h3v3h-3zM245 52h4v2h-4zM152 12h3v2h-3zM261 14h2v3h-2zM227 29h3v4h-3zM112 8h2v2h-2zM93 2h2v5h-2zM173 55h4v4h-4zM293 56h2v4h-2zM313 42h2v3h-2zM102 37h5v3h-5zM244 36h4v2h-4zM69 19h4v3h-4zM101 25h4v2h-4zM254 12h2v2h-2zM163 52h2v3h-2zM70 36h5v3h-5zM274 47h3v3h-3zM205 33h3v3h-3zM319 23h3v5h-3z"/><path fill="#e1e0d1" d="M244 11h4v5h-4zM52 57h3v3h-3zM224 7h2v3h-2zM204 14h3v5h-3zM277 31h5v5h-5zM62 -1h4v3h-4zM279 4h4v5h-4zM284 23h5v5h-5zM20 5h4v5h-4zM199 50h4v4h-4zM192 36h4v5h-4zM200 35h3v5h-3zM189 20h5v4h-5zM172 26h3v3h-3zM301 53h3v3h-3zM289 25h2v2h-2zM132 43h2v2h-2zM159 57h4v3h-4zM271 36h3v3h-3zM166 16h2v2h-2zM279 34h3v4h-3zM92 42h3v2h-3zM125 28h3v3h-3zM246 25h3v5h-3zM153 16h2v4h-2zM97 46h5v5h-5zM169 3h4v3h-4zM270 43h2v3h-2zM82 31h2v2h-2zM82 11h4v3h-4zM174 6h3v2h-3zM121 8h5v3h-5zM277 26h2v3h-2zM161 49h2v3h-2zM166 19h2v5h-2zM288 53h3v4h-3zM269 30h3v5h-3zM303 53h2v3h-2zM106 27h3v4h-3zM232 54h5v3h-5zM255 20h4v4h-4zM205 19h2v4h-2zM238 23h2v2h-2zM193 21h5v4h-5zM13 -2h5v5h-5zM177 19h2v2h-2zM7 44h4v3h-4zM31 52h2v5h-2zM225 -2h2v4h-2zM279 25h2v3h-2zM191 4h3v2h-3zM113 12h2v3h-2zM73 8h3v2h-3zM188 11h5v3h-5zM119 23h3v3h-3zM315 7h2v3h-2zM-1 30h2v2h-2zM88 20h4v3h-4zM296 2h3v2h-3zM70 10h3v5h-3zM251 30h2v4h-2zM7 56h4v2h-4zM80 52h3v2h-3zM243 47h5v2h-5zM218 2h3v2h-3zM251 36h2v5h-2zM269 36h4v4h-4zM5 57h3v3h-3zM281 8h3v2h-3zM318 9h2v3h-2zM69 43h5v2h-5zM305 56h3v4h-3zM223 26h3v2h-3zM198 34h2v4h-2zM31 15h2v3h-2zM314 31h2v2h-2zM153 49h3v4h-3zM302 20h3v2h-3zM5 51h2v4h-2zM127 8h2v3h-2zM127 53h5v5h-5zM137 6h5v3h-5zM308 34h3v3h-3zM232 25h2v4h-2zM304 -2h2v5h-2zM153 -1h2v3h-2zM41 25h3v3h-3zM83 13h2v2h-2zM211 33h3v3h-3zM102 8h5v3h-5zM71 38h2v4h-2zM176 1h2v2h-2zM106 41h3v2h-3zM104 24h2v4h-2zM162 11h3v3h-3zM304 15h3v2h-3zM183 46h3v4h-3zM189 49h4v3h-4zM218 26h4v2h-4zM108 58h4v3h-4zM247 36h3v4h-3zM31 50h2v2h-2zM101 9h2v3h-2zM33 33h2v3h-2zM295 -2h4v3h-4zM308 33h3v3h-3zM217 10h2v4h-2zM55 5h2v2h-2zM242 40h3v3h-3zM124 -2h3v3h-3zM231 21h3v3h-3zM25 50h3v2h-3zM207 18h3v3h-3zM254 7h2v3h-2zM43 10h3v2h-3zM158 14h4v5h-4zM184 22h2v3h-2zM134 8h2v4h-2zM93 -2h3v4h-3zM245 33h2v2h-2zM283 25h4v3h-4zM251 28h2v4h-2zM227 18h2v3h-2zM75 43h4v4h-4zM74 36h3v3h-3zM168 17h2v3h-2zM64 31h4v3h-4zM275 31h2v3h-2zM119 46h4v4h-4zM57 17h3v3h-3zM25 19h3v5h-3zM194 54h4v4h-4zM186 32h2v2h-2zM209 36h2v2h-2zM113 21h3v3h-3zM292 7h5v5h-5zM87 30h3v3h-3zM102 35h3v5h-3zM5 3h3v3h-3zM96 11h4v4h-4zM317 31h4v4h-4zM77 11h2v5h-2zM89 34h2v3h-2zM51 55h5v5h-5zM176 -2h2v5h-2zM43 4h4v2h-4zM178 42h3v5h-3zM245 12h2v2h-2zM295 20h4v3h-4zM72 43h2v3h-2zM215 32h2v4h-2zM136 39h3v3h-3zM166 30h4v2h-4zM238 59h4v3h-4zM136 27h3v5h-3zM297 29h3v4h-3zM155 31h2v5h-2zM300 26h2v2h-2zM54 2h2v2h-2zM297 22h5v3h-5zM120 -1h5v5h-5zM28 6h5v2h-5zM300 44h2v3h-2zM103 30h5v2h-5zM94 55h3v4h-3zM25 10h2v3h-2zM69 35h2v3h-2zM152 9h5v2h-5zM202 29h3v4h-3zM238 25h2v3h-2zM238 6h3v5h-3zM79 36h4v4h-4zM1 27h4v4h-4zM82 35h2v2h-2zM274 -2h2v2h-2zM95 36h2v3h-2zM282 -2h5v5h-5zM72 -2h5v2h-5zM281 24h4v2h-4zM275 5h3v4h-3zM200 21h4v5h-4zM117 40h4v2h-4zM254 49h3v2h-3zM23 47h2v3h-2zM155 1h4v5h-4zM80 1h3v5h-3zM13 1h2v5h-2zM150 24h5v2h-5zM265 42h3v5h-3zM262 3h3v3h-3zM231 12h2v2h-2zM147 40h3v3h-3zM74 15h3v4h-3zM95 31h2v3h-2zM162 11h2v3h-2zM11 3h4v3h-4zM69 34h2v3h-2zM87 59h2v5h-2zM97 36h2v2h-2zM135 16h4v5h-4zM64 57h3v4h-3zM103 11h2v3h-2zM287 1h3v5h-3zM30 34h2v2h-2zM233 16h2v2h-2zM158 49h3v3h-3zM22 44h3v3h-3zM313 10h3v5h-3zM189 17h2v4h-2zM292 9h2v3h-2zM149 9h3v3h-3zM29 -2h2v3h-2zM12 54h4v3h-4z"/><path fill="#b6b5a5" d="M109 43h4v5h-4zM149 59h3v3h-3zM224 42h2v2h-2zM141 35h3v2h-3zM177 58h3v3h-3zM297 32h2v5h-2zM301 24h5v2h-5zM191 55h3v3h-3zM177 15h3v3h-3zM78 59h5v4h-5zM276 41h5v2h-5zM103 19h2v4h-2zM199 41h4v4h-4zM135 8h2v5h-2zM54 0h5v2h-5zM280 52h2v5h-2zM28 51h3v2h-3zM12 54h5v2h-5zM123 55h2v5h-2zM175 0h4v5h-4zM60 5h5v3h-5zM104 47h3v2h-3zM304 48h2v2h-2zM215 3h3v3h-3zM257 11h5v2h-5zM284 33h3v3h-3zM191 18h5v4h-5zM58 11h3v2h-3zM170 13h2v3h-2zM299 50h2v2h-2zM88 30h3v2h-3zM156 31h4v4h-4zM0 27h4v2h-4zM111 32h4v3h-4zM151 7h2v4h-2zM73 -2h3v3h-3zM84 7h4v4h-4zM24 18h2v3h-2zM313 17h2v3h-2zM92 18h2v5h-2zM305 48h2v3h-2zM175 34h2v3h-2zM49 9h2v2h-2zM288 2h5v4h-5zM268 16h5v2h-5zM258 25h3v2h-3zM189 24h4v4h-4zM104 19h3v3h-3zM161 3h2v2h-2zM128 27h5v2h-5z"/><path fill="#e8e7d9" d="M71 -1h3v2h-3zM275 12h3v3h-3zM24 12h2v2h-2zM102 36h3v2h-3zM208 8h3v3h-3zM115 13h2v3h-2zM168 4h5v3h-5zM123 30h3v3h-3zM127 9h3v5h-3zM213 48h3v3h-3zM149 42h4v5h-4zM210 56h2v5h-2zM117 30h4v3h-4zM26 24h2v3h-2zM144 43h5v3h-5zM-1 49h3v4h-3zM164 37h2v3h-2zM238 21h2v2h-2zM262 4h3v2h-3zM143 0h2v2h-2zM291 57h3v2h-3zM146 37h4v3h-4zM108 18h2v2h-2zM202 33h4v3h-4zM86 25h3v3h-3zM291 3h3v4h-3zM213 47h2v5h-2zM197 8h2v3h-2zM179 2h4v2h-4zM54 49h2v3h-2zM299 55h3v5h-3zM175 12h2v4h-2zM262 50h3v5h-3zM115 58h5v5h-5zM140 55h3v3h-3zM10 23h3v3h-3zM7 15h4v3h-4zM190 36h3v5h-3zM157 12h5v2h-5zM52 28h5v4h-5zM164 49h3v2h-3zM68 43h4v2h-4zM73 3h4v2h-4zM143 1h5v2h-5zM294 25h3v2h-3zM209 58h3v4h-3zM0 52h2v3h-2zM26 47h4v2h-4zM134 20h4v2h-4zM42 56h3v2h-3zM314 28h3v3h-3zM70 56h2v2h-2zM164 3h4v5h-4zM94 59h2v5h-2zM62 37h3v5h-3zM138 24h2v4h-2zM185 17h3v2h-3zM120 16h3v2h-3zM284 15h2v2h-2zM296 52h2v2h-2zM252 45h2v2h-2zM70 39h2v2h-2zM118 36h2v3h-2zM1 29h2v5h-2zM35 1h3v5h-3zM166 0h4v2h-4zM122 43h3v2h-3zM152 28h3v2h-3zM85 26h4v5h-4zM46 4h3v3h-3zM249 9h4v2h-4zM186 54h3v3h-3zM285 30h5v5h-5zM250 36h5v3h-5zM237 48h4v3h-4zM73 7h3v2h-3zM25 20h3v4h-3zM82 10h2v4h-2zM117 52h3v3h-3zM88 12h3v2h-3zM130 16h4v2h-4zM22 42h5v2h-5zM31 31h3v2h-3zM280 6h2v3h-2zM265 10h4v2h-4zM244 34h2v3h-2zM233 52h3v5h-3zM63 36h3v2h-3zM137 43h2v4h-2zM168 7h5v3h-5zM148 47h3v5h-3zM174 5h2v4h-2zM264 15h3v3h-3zM218 57h3v2h-3zM157 44h4v5h-4zM27 17h4v2h-4zM118 0h2v4h-2zM141 27h3v3h-3zM39 54h4v2h-4zM11 0h2v5h-2zM2 49h3v3h-3zM197 31h5v4h-5zM315 24h5v5h-5zM181 38h4v3h-4zM93 31h2v3h-2zM35 42h2v2h-2zM266 14h4v2h-4zM303 20h3v5h-3zM226 48h2v3h-2zM245 35h3v2h-3zM215 55h3v4h-3zM129 29h2v4h-2zM247 31h2v2h-2zM118 41h3v5h-3zM157 38h2v2h-2zM144 41h2v5h-2zM154 24h5v5h-5zM319 46h2v3h-2zM150 30h4v3h-4zM162 11h2v4h-2zM59 15h3v2h-3zM253 54h3v3h-3zM18 32h2v2h-2zM280 16h5v2h-5zM87 45h3v3h-3zM234 38h5v4h-5zM247 23h3v5h-3zM255 17h2v5h-2zM128 35h3v4h-3zM265 33h2v2h-2zM4 29h5v2h-5zM134 26h5v4h-5zM192 8h4v3h-4zM194 26h2v5h-2zM160 32h3v5h-3zM299 8h3v2h-3zM205 13h2v2h-2zM154 2h3v2h-3zM17 15h4v5h-4zM97 46h3v4h-3zM77 29h3v2h-3zM96 4h2v2h-2zM159 38h3v3h-3zM289 27h4v5h-4zM218 44h2v2h-2zM118 12h3v4h-3zM239 57h3v2h-3zM276 21h2v4h-2zM106 16h4v3h-4zM90 49h5v5h-5zM190 42h5v4h-5zM108 10h4v4h-4zM50 39h3v5h-3zM148 12h2v3h-2zM246 42h3v3h-3zM161 55h2v3h-2zM72 26h5v3h-5zM115 23h4v2h-4zM62 58h3v3h-3zM0 47h3v3h-3zM43 -2h3v3h-3zM297 25h3v3h-3zM246 12h2v4h-2zM302 25h2v2h-2zM69 37h5v5h-5zM296 13h2v2h-2zM268 18h2v3h-2zM21 0h3v5h-3zM32 0h3v5h-3zM238 25h5v2h-5z"/><path fill="#c5c4b3" d="M76 -1h3v3h-3zM143 15h5v2h-5zM95 41h5v4h-5zM21 19h2v2h-2zM237 3h2v3h-2zM58 36h2v4h-2zM186 41h3v4h-3zM210 19h2v4h-2zM316 5h3v5h-3zM196 21h3v2h-3zM315 7h3v4h-3zM135 20h2v2h-2zM140 49h3v2h-3zM52 39h2v2h-2zM179 11h4v3h-4zM94 51h2v2h-2zM42 4h2v4h-2zM166 37h4v3h-4zM147 6h5v3h-5zM70 25h3v2h-3zM19 6h2v2h-2zM186 21h2v2h-2zM36 59h5v5h-5zM271 17h4v3h-4zM236 36h2v2h-2zM235 27h2v3h-2zM274 52h3v3h-3zM223 12h2v2h-2zM228 14h3v5h-3zM102 46h2v5h-2zM141 56h2v4h-2zM92 2h2v3h-2zM92 19h5v4h-5zM76 19h3v3h-3zM155 15h4v3h-4zM212 9h5v2h-5zM273 32h2v4h-2zM113 40h4v2h-4zM215 34h2v3h-2zM-2 37h2v2h-2zM13 38h2v5h-2zM205 26h3v4h-3zM206 3h5v3h-5zM129 6h3v5h-3zM16 20h2v5h-2zM244 41h2v3h-2zM293 21h2v5h-2zM244 26h5v3h-5zM116 44h3v3h-3zM139 41h2v5h-2zM43 45h5v3h-5zM203 42h3v3h-3zM112 37h2v5h-2zM22 49h3v3h-3zM202 12h4v3h-4zM258 14h4v3h-4zM277 58h5v5h-5zM225 2h2v5h-2zM130 14h5v5h-5zM124 51h2v4h-2zM115 33h3v5h-3zM216 37h2v4h-2zM259 -2h2v2h-2zM275 54h5v2h-5zM160 51h3v2h-3zM42 5h2v3h-2zM5 27h2v2h-2zM128 52h3v3h-3zM166 47h3v2h-3zM87 -2h4v5h-4zM87 7h3v4h-3zM220 7h4v5h-4zM289 15h2v3h-2zM106 43h2v2h-2zM259 14h3v2h-3zM26 11h2v3h-2zM22 37h5v2h-5zM304 10h3v4h-3zM188 45h4v3h-4zM103 39h3v4h-3zM87 12h5v3h-5zM178 54h2v3h-2zM292 44h3v3h-3zM70 5h3v4h-3zM121 17h2v5h-2zM308 26h3v3h-3zM245 19h3v5h-3zM162 38h2v3h-2zM258 -1h3v2h-3zM240 0h5v2h-5zM224 36h2v3h-2zM101 56h2v5h-2zM315 42h4v3h-4zM144 7h3v2h-3zM177 12h2v5h-2zM154 13h5v4h-5zM70 12h4v2h-4z"/><path fill="#a7a696" d="M296 31h5v3h-5zM306 41h2v2h-2zM276 10h3v3h-3zM229 14h3v5h-3zM204 40h3v4h-3zM228 45h4v2h-4zM38 29h3v5h-3zM92 44h3v3h-3zM214 14h5v2h-5zM257 53h5v4h-5zM305 54h5v2h-5zM263 19h4v2h-4zM129 45h2v2h-2zM14 1h2v5h-2zM34 40h2v5h-2zM276 18h2v2h-2zM269 57h2v2h-2zM119 41h4v2h-4zM289 7h3v4h-3zM257 -2h2v3h-2zM151 58h3v2h-3zM17 46h2v3h-2zM86 19h2v4h-2zM163 16h4v3h-4zM280 9h2v3h-2zM48 0h3v5h-3zM290 0h3v4h-3zM295 19h3v3h-3zM21 40h2v2h-2zM147 6h2v4h-2zM303 16h5v2h-5zM240 6h3v3h-3zM303 12h4v2h-4zM318 53h5v2h-5zM181 21h3v2h-3z"/><path fill="#e1e0d1" d="M150 45h2v2h-2zM165 38h2v2h-2zM8 32h3v2h-3zM26 37h5v4h-5zM207 57h3v2h-3zM202 41h2v2h-2zM293 24h3v4h-3zM205 5h3v3h-3zM302 49h2v2h-2zM234 7h2v2h-2zM174 12h3v2h-3zM52 6h5v3h-5zM19 58h5v2h-5zM273 37h2v3h-2zM92 41h4v4h-4zM136 17h2v5h-2zM54 10h4v4h-4zM208 35h4v3h-4zM1 12h2v2h-2zM98 41h3v2h-3zM291 12h3v3h-3zM291 54h3v5h-3zM29 34h2v3h-2zM181 59h3v3h-3zM311 37h2v3h-2zM-2 16h3v5h-3zM166 0h5v2h-5zM7 32h2v2h-2zM27 3h3v3h-3zM224 33h5v5h-5zM47 16h3v4h-3zM171 53h4v2h-4zM138 35h2v3h-2zM126 9h2v3h-2zM259 32h5v3h-5zM181 47h2v2h-2zM303 17h5v4h-5zM151 32h4v2h-4zM112 19h3v5h-3zM213 24h3v3h-3zM252 48h3v5h-3zM67 40h5v3h-5zM227 15h3v3h-3zM200 34h2v5h-2zM238 29h5v3h-5zM304 32h4v5h-4zM19 39h4v5h-4zM69 43h3v4h-3zM239 23h2v4h-2zM292 31h3v3h-3zM241 38h2v3h-2zM172 31h2v5h-2zM134 44h2v2h-2zM165 22h2v5h-2zM106 6h2v3h-2zM308 17h3v5h-3zM266 48h2v3h-2zM194 2h2v5h-2zM170 42h4v4h-4zM56 28h2v2h-2zM294 53h3v2h-3zM123 46h3v5h-3zM107 57h3v3h-3zM16 40h3v4h-3zM60 36h5v3h-5zM208 18h5v4h-5zM158 15h3v4h-3zM88 41h5v5h-5zM31 1h3v5h-3zM211 30h5v2h-5zM97 38h5v2h-5zM301 19h4v4h-4zM305 39h3v4h-3zM111 22h2v3h-2zM310 51h2v5h-2zM289 14h4v3h-4zM45 13h3v4h-3zM194 21h4v2h-4zM190 40h4v3h-4zM41 4h2v5h-2zM35 55h2v2h-2zM316 22h2v2h-2zM183 48h2v3h-2zM44 41h3v3h-3zM185 44h3v5h-3zM198 20h2v3h-2zM125 21h4v3h-4zM175 22h3v3h-3zM131 19h5v2h-5zM201 15h2v4h-2zM152 20h5v5h-5zM271 18h5v4h-5zM86 9h5v2h-5zM70 53h3v3h-3zM116 16h3v4h-3zM97 50h2v2h-2zM193 24h5v3h-5zM117 14h5v2h-5zM263 55h2v2h-2zM78 49h3v2h-3zM53 42h4v2h-4zM184 39h3v2h-3zM157 14h4v5h-4zM86 46h3v2h-3zM173 9h3v3h-3zM89 33h3v3h-3zM65 19h2v5h-2zM126 49h3v2h-3zM277 25h3v3h-3zM13 45h3v2h-3zM88 47h3v3h-3zM254 45h4v5h-4zM21 59h2v3h-2zM14 45h2v3h-2zM259 5h3v2h-3zM240 48h4v2h-4zM263 21h5v3h-5zM171 11h2v5h-2zM101 27h3v5h-3zM319 34h2v2h-2zM204 27h2v5h-2zM218 0h5v2h-5zM112 57h2v4h-2zM75 18h2v5h-2zM94 5h3v5h-3zM231 45h3v2h-3zM89 12h4v2h-4zM167 49h2v2h-2zM298 31h5v3h-5zM259 11h4v3h-4zM142 24h3v2h-3zM304 42h2v5h-2zM283 4h3v5h-3zM94 -2h2v4h-2zM219 24h2v4h-2zM54 51h4v3h-4zM72 35h2v4h-2zM253 42h3v3h-3zM50 58h5v2h-5zM307 28h3v3h-3zM217 27h2v5h-2zM96 12h3v3h-3zM227 6h3v5h-3zM47 7h3v3h-3zM69 50h2v3h-2zM109 9h3v5h-3zM290 54h3v2h-3zM60 26h2v4h-2zM14 10h5v5h-5zM57 48h4v3h-4zM177 4h3v2h-3zM311 0h3v2h-3zM11 43h2v5h-2zM179 35h2v3h-2zM2 35h2v5h-2zM112 21h2v2h-2zM117 15h5v2h-5zM160 1h2v3h-2zM130 47h3v4h-3zM235 48h2v2h-2zM91 15h3v2h-3zM253 32h2v2h-2zM149 48h3v4h-3zM291 14h2v3h-2zM166 25h4v5h-4zM31 -1h3v5h-3zM14 45h2v4h-2zM7 36h4v4h-4zM153 59h3v3h-3zM31 30h2v2h-2zM2 31h3v4h-3zM64 53h3v2h-3zM73 18h3v2h-3zM134 36h2v3h-2zM180 24h5v4h-5zM145 19h4v4h-4zM181 18h4v3h-4zM162 54h2v4h-2zM201 26h5v3h-5zM223 52h2v5h-2zM37 53h3v4h-3zM220 34h3v5h-3zM238 42h3v4h-3zM195 29h3v2h-3zM257 25h2v5h-2zM114 17h2v2h-2zM296 3h3v3h-3zM228 38h2v2h-2zM133 45h3v3h-3zM106 27h2v3h-2zM49 35h4v3h-4zM299 18h3v3h-3zM28 39h4v2h-4zM106 3h3v2h-3zM50 51h4v5h-4zM30 35h5v3h-5zM207 44h4v3h-4zM94 54h2v2h-2zM64 12h3v2h-3zM80 0h5v2h-5zM258 7h4v2h-4zM277 52h2v4h-2zM158 10h2v2h-2zM233 8h2v3h-2zM184 21h3v4h-3zM86 45h2v5h-2zM190 12h2v5h-2zM32 53h2v2h-2zM95 38h2v3h-2zM130 27h3v2h-3zM175 59h5v2h-5zM25 45h4v3h-4zM231 18h2v4h-2zM65 1h2v2h-2zM97 11h2v2h-2zM160 44h5v4h-5zM303 42h4v2h-4zM36 26h3v3h-3zM244 53h2v5h-2zM42 53h2v2h-2zM105 16h2v3h-2zM178 9h4v5h-4zM149 39h3v3h-3zM71 29h2v3h-2zM272 53h3v3h-3zM124 -1h3v2h-3zM158 27h3v3h-3zM113 51h2v5h-2zM37 41h5v5h-5zM285 19h5v3h-5zM88 44h3v2h-3zM122 8h5v4h-5z"/><path fill="#d1d0bf" d="M307 53h3v4h-3zM196 13h3v4h-3zM132 23h3v5h-3zM276 39h2v5h-2zM24 18h3v3h-3zM85 7h2v5h-2zM77 59h2v5h-2zM279 42h3v3h-3zM189 15h2v2h-2zM34 56h4v2h-4zM232 22h4v2h-4zM144 49h2v3h-2zM285 53h4v2h-4zM85 50h5v3h-5zM183 36h2v5h-2zM236 18h3v3h-3zM107 16h2v3h-2zM202 11h4v2h-4zM281 32h2v3h-2zM146 48h3v3h-3zM269 53h5v4h-5zM169 13h3v5h-3zM16 8h2v2h-2zM72 37h2v5h-2zM62 55h3v4h-3zM238 24h3v3h-3zM26 56h2v5h-2zM263 30h5v5h-5zM270 14h2v3h-2zM251 41h3v2h-3zM155 25h2v3h-2zM101 36h2v2h-2zM204 0h3v4h-3zM201 25h2v3h-2zM130 31h3v2h-3zM16 43h5v3h-5zM251 51h2v4h-2zM305 3h5v3h-5zM190 52h5v2h-5zM305 7h3v4h-3zM154 12h2v3h-2zM286 33h3v4h-3zM40 1h4v3h-4zM122 36h2v3h-2zM140 6h2v3h-2zM82 33h3v4h-3zM94 47h3v3h-3zM253 0h2v4h-2zM8 12h2v3h-2zM245 11h4v2h-4zM91 2h2v2h-2zM219 15h4v4h-4zM110 0h2v5h-2zM76 32h2v2h-2zM221 19h2v5h-2zM28 55h2v5h-2zM141 48h3v4h-3zM276 42h3v5h-3zM95 -1h3v3h-3zM62 58h2v3h-2zM247 57h3v4h-3zM87 40h5v5h-5zM260 40h5v4h-5zM224 41h3v2h-3zM163 46h4v4h-4zM313 50h2v2h-2zM32 59h3v4h-3zM43 29h3v3h-3zM9 46h2v4h-2zM29 20h2v3h-2zM193 15h2v4h-2zM172 49h3v3h-3zM237 56h3v4h-3zM171 37h4v2h-4zM256 3h3v2h-3zM112 35h5v3h-5zM112 5h4v5h-4zM155 17h3v4h-3zM49 16h3v5h-3zM224 58h5v4h-5zM251 15h3v3h-3zM263 20h4v2h-4zM229 11h4v5h-4zM8 57h5v3h-5zM59 44h5v3h-5zM62 1h4v3h-4zM84 35h4v2h-4zM46 42h3v2h-3zM301 41h3v3h-3zM311 39h2v5h-2zM301 10h3v4h-3zM139 -1h3v3h-3zM171 7h4v5h-4zM299 12h3v4h-3zM118 59h5v3h-5zM304 58h2v3h-2zM34 9h3v2h-3zM141 34h3v3h-3zM4 11h4v2h-4zM301 56h2v3h-2zM182 57h3v4h-3zM161 37h3v4h-3zM233 42h2v3h-2zM144 28h3v2h-3zM172 9h3v4h-3zM258 53h2v2h-2zM36 22h5v3h-5zM67 53h3v4h-3zM250 38h3v2h-3zM45 20h3v3h-3zM270 56h4v5h-4zM108 17h2v3h-2zM202 11h4v2h-4zM170 1h3v4h-3zM162 43h3v5h-3zM315 0h5v2h-5zM239 27h3v2h-3zM61 17h2v4h-2zM99 47h3v3h-3zM252 34h2v2h-2zM242 2h2v3h-2zM209 19h2v2h-2zM64 10h3v5h-3zM196 56h2v3h-2zM147 10h2v2h-2zM179 42h5v2h-5zM141 37h3v2h-3zM199 27h3v2h-3zM180 50h3v2h-3zM151 45h2v2h-2zM195 43h2v2h-2zM82 22h5v2h-5zM204 3h2v2h-2zM53 15h3v4h-3zM277 -2h3v5h-3zM22 41h2v3h-2zM279 44h2v2h-2zM184 -2h4v5h-4z"/><path fill="#dad9ca" d="M219 33h3v2h-3zM281 44h3v3h-3zM48 0h2v3h-2zM302 14h2v4h-2zM100 16h3v2h-3zM153 6h5v3h-5zM171 1h4v3h-4zM156 3h5v3h-5zM2 47h4v2h-4zM104 31h2v3h-2zM225 50h3v4h-3zM69 24h3v3h-3zM40 23h2v2h-2zM142 3h4v4h-4zM227 11h3v2h-3zM130 21h3v2h-3zM23 53h2v2h-2zM141 24h2v2h-2zM194 51h5v2h-5zM153 9h3v2h-3zM31 24h5v2h-5zM265 34h5v4h-5zM274 54h5v2h-5zM289 50h2v2h-2zM285 18h5v3h-5zM110 12h2v3h-2zM156 45h5v5h-5zM221 43h3v3h-3zM77 -1h3v3h-3zM276 5h4v2h-4zM244 54h2v2h-2zM191 59h3v3h-3zM100 22h3v2h-3zM1 21h3v3h-3zM12 26h3v3h-3zM306 31h3v5h-3zM150 -2h4v3h-4zM55 43h3v4h-3zM204 -1h5v3h-5zM-2 8h2v4h-2zM184 46h2v3h-2zM282 54h2v5h-2zM6 43h5v4h-5zM270 41h2v2h-2zM179 23h3v4h-3zM86 20h3v4h-3zM179 32h2v3h-2zM225 2h2v2h-2zM218 45h2v2h-2zM162 6h3v3h-3zM185 3h2v2h-2zM235 13h2v5h-2zM85 2h2v2h-2zM294 47h2v3h-2zM11 57h3v3h-3zM105 19h3v4h-3zM310 43h5v4h-5zM24 49h3v5h-3zM276 52h2v2h-2zM258 49h5v2h-5zM70 28h2v2h-2zM89 1h5v2h-5zM89 18h3v3h-3zM99 38h3v3h-3zM100 7h3v4h-3zM161 42h3v2h-3zM240 48h3v4h-3zM31 20h2v2h-2zM56 57h2v4h-2zM198 35h3v5h-3zM8 25h2v2h-2zM207 17h3v2h-3zM267 14h4v5h-4zM66 7h3v4h-3zM177 20h4v4h-4zM259 20h3v2h-3zM93 0h2v3h-2zM196 28h4v2h-4zM74 20h5v5h-5zM74 43h2v5h-2zM211 38h4v4h-4zM212 19h3v3h-3zM-1 20h4v3h-4zM192 0h4v4h-4zM67 43h5v4h-5zM13 4h2v2h-2zM131 58h3v4h-3zM93 10h2v3h-2zM166 13h3v2h-3zM212 50h5v2h-5zM183 50h3v4h-3zM289 59h5v4h-5zM100 23h3v3h-3zM107 42h3v4h-3zM39 46h4v5h-4zM268 32h4v4h-4zM160 30h4v4h-4zM228 52h4v2h-4zM242 35h4v3h-4zM283 35h3v5h-3zM-1 5h2v2h-2zM49 18h3v2h-3zM186 7h5v2h-5zM156 30h5v5h-5zM249 27h2v3h-2zM141 11h2v3h-2zM211 -2h5v2h-5zM125 57h5v2h-5zM262 22h2v5h-2zM180 25h3v4h-3zM0 30h4v4h-4zM245 12h3v2h-3zM29 13h2v3h-2zM26 8h3v2h-3zM194 29h5v2h-5zM226 26h2v2h-2zM253 43h3v2h-3zM26 3h3v2h-3zM256 8h3v4h-3zM75 54h5v2h-5zM259 30h5v3h-5zM287 32h3v4h-3zM271 12h5v5h-5zM317 30h2v3h-2zM155 27h2v2h-2zM221 27h3v3h-3zM272 8h2v5h-2zM25 -1h5v4h-5zM281 50h2v3h-2zM290 31h3v5h-3zM209 24h4v4h-4zM95 55h3v5h-3zM262 20h4v2h-4zM123 6h2v2h-2zM270 4h3v4h-3zM286 7h3v3h-3zM80 1h3v4h-3zM36 17h5v4h-5zM235 55h4v5h-4zM151 37h3v5h-3zM11 11h3v5h-3zM87 58h5v2h-5zM156 58h3v5h-3zM186 56h4v3h-4zM51 14h3v5h-3zM277 19h5v3h-5zM251 46h4v3h-4zM61 18h4v4h-4zM120 44h5v2h-5zM290 5h3v4h-3zM273 50h5v5h-5zM144 3h3v4h-3zM291 4h2v3h-2zM192 50h3v3h-3zM207 13h3v2h-3zM149 33h3v5h-3zM144 13h2v3h-2zM149 51h3v3h-3zM159 36h2v5h-2zM218 50h4v4h-4zM109 4h2v2h-2zM247 1h2v3h-2zM182 53h4v2h-4zM231 27h3v2h-3zM127 30h2v4h-2zM239 -2h3v2h-3zM41 40h2v5h-2zM295 53h5v4h-5zM108 42h3v5h-3zM133 32h4v5h-4zM270 14h4v2h-4zM170 56h4v3h-4zM271 51h3v3h-3zM243 7h2v4h-2zM109 7h3v5h-3zM247 27h3v5h-3zM237 54h2v2h-2zM31 17h2v2h-2zM169 22h4v3h-4zM195 43h3v4h-3zM157 1h2v3h-2zM217 35h3v2h-3zM155 0h3v3h-3zM27 31h2v5h-2zM25 1h4v4h-4zM274 2h3v2h-3zM191 43h4v4h-4zM313 38h3v5h-3zM194 14h2v3h-2zM283 14h2v2h-2zM38 34h2v3h-2zM244 55h4v5h-4zM224 -1h2v3h-2zM219 27h2v4h-2zM277 21h5v4h-5zM233 24h4v4h-4zM212 57h3v2h-3zM317 54h2v3h-2zM277 19h4v2h-4zM109 0h3v2h-3zM61 39h3v3h-3zM217 8h3v4h-3zM86 7h4v3h-4zM263 44h3v4h-3zM107 29h5v2h-5zM230 40h5v3h-5zM122 40h2v3h-2zM280 22h5v2h-5zM215 9h5v2h-5zM152 -2h4v3h-4zM277 47h2v5h-2zM275 49h3v3h-3zM36 14h2v3h-2zM253 56h3v3h-3zM177 14h2v3h-2z"/><path fill="#e8e7d9" d="M127 2h2v3h-2zM142 19h4v4h-4zM130 10h5v3h-5zM8 1h4v2h-4zM118 42h5v2h-5zM277 15h2v2h-2zM42 57h2v3h-2zM60 11h4v4h-4zM70 23h5v5h-5zM316 28h2v4h-2zM58 39h3v3h-3zM279 22h3v3h-3zM79 1h2v2h-2zM96 5h2v5h-2zM254 10h3v2h-3zM316 23h5v5h-5zM222 21h2v5h-2zM92 22h5v5h-5zM153 44h3v5h-3zM52 12h4v3h-4zM162 6h3v2h-3zM23 56h2v3h-2zM45 10h3v3h-3zM21 15h3v3h-3zM133 57h4v2h-4zM276 36h3v3h-3zM183 35h3v2h-3zM127 15h3v4h-3zM232 4h2v3h-2zM221 25h2v4h-2zM14 32h4v3h-4zM266 42h5v5h-5zM253 4h3v2h-3zM137 13h4v2h-4zM221 20h2v3h-2zM147 27h2v2h-2zM299 22h2v2h-2zM17 57h5v2h-5zM69 54h4v3h-4zM90 12h4v3h-4zM215 8h2v2h-2zM229 4h2v5h-2zM250 44h2v2h-2zM303 11h3v5h-3zM135 36h2v3h-2zM161 40h3v4h-3zM226 39h3v5h-3zM237 4h3v3h-3zM84 49h3v5h-3zM35 18h3v3h-3zM36 26h5v3h-5zM111 30h4v2h-4zM245 12h3v2h-3zM220 12h5v3h-5zM26 20h3v5h-3zM314 38h2v3h-2zM258 18h2v5h-2zM70 59h2v2h-2zM12 6h3v2h-3zM157 59h5v3h-5zM268 6h4v4h-4zM204 58h3v3h-3zM19 21h5v4h-5zM116 36h3v4h-3zM67 18h2v2h-2zM233 59h3v5h-3zM310 20h3v2h-3zM77 8h3v5h-3zM155 36h5v2h-5zM57 20h2v3h-2zM198 49h3v3h-3zM15 17h2v3h-2zM137 3h2v5h-2zM237 3h2v3h-2zM211 33h3v5h-3zM234 55h3v2h-3zM281 31h5v2h-5zM176 26h5v5h-5zM279 51h3v2h-3zM75 2h2v4h-2zM185 23h3v3h-3zM264 9h3v3h-3zM252 10h3v2h-3zM20 51h3v2h-3zM152 38h3v2h-3zM291 47h5v2h-5zM157 14h2v3h-2zM58 6h3v3h-3zM43 29h2v5h-2zM135 51h5v5h-5zM107 59h3v3h-3zM222 14h2v4h-2zM81 50h2v5h-2zM28 51h2v3h-2zM208 43h3v3h-3zM99 1h3v3h-3zM312 6h4v3h-4zM161 13h2v2h-2zM262 21h3v5h-3zM283 21h2v5h-2zM83 52h2v3h-2zM279 37h2v5h-2zM241 16h4v3h-4zM305 55h2v5h-2zM42 10h5v2h-5zM87 8h5v3h-5zM100 47h5v2h-5zM260 55h5v2h-5zM19 9h5v2h-5zM146 26h5v5h-5zM46 47h4v4h-4zM160 31h4v2h-4zM268 51h2v3h-2zM98 35h3v4h-3zM79 23h2v4h-2zM98 8h2v3h-2zM250 9h2v3h-2zM15 37h4v3h-4zM106 0h3v5h-3zM237 28h2v2h-2zM107 4h4v5h-4zM230 8h2v3h-2zM208 15h5v3h-5zM14 24h2v2h-2zM200 24h3v3h-3zM165 58h3v5h-3zM207 33h5v5h-5zM240 14h2v3h-2zM318 33h2v2h-2zM185 4h3v2h-3zM136 13h5v3h-5zM156 50h3v2h-3zM124 25h3v3h-3zM46 42h4v2h-4zM191 14h3v5h-3zM275 18h5v5h-5zM235 41h4v2h-4zM91 53h2v2h-2zM104 56h2v4h-2zM294 19h3v2h-3zM199 35h3v3h-3zM278 33h2v2h-2zM280 23h5v2h-5zM111 3h2v3h-2zM105 41h4v2h-4zM272 20h3v3h-3zM59 58h4v4h-4zM38 2h4v3h-4zM211 40h5v3h-5zM213 47h5v2h-5zM56 10h3v3h-3zM289 48h5v5h-5zM175 53h3v2h-3zM145 30h2v3h-2zM203 42h5v3h-5z"/><path fill="#c5c4b3" d="M156 12h2v4h-2zM31 16h3v2h-3zM239 59h2v3h-2zM315 12h2v3h-2zM226 43h5v5h-5zM285 8h2v3h-2zM17 37h2v2h-2zM296 49h2v2h-2zM272 48h3v5h-3zM180 10h2v2h-2zM227 3h2v4h-2zM265 54h3v3h-3zM238 -2h3v3h-3zM139 27h5v2h-5zM49 37h2v4h-2zM36 22h3v2h-3zM63 14h2v4h-2zM7 56h3v3h-3zM300 15h3v2h-3zM7 7h4v3h-4zM9 49h3v2h-3zM98 19h4v3h-4zM96 53h4v3h-4zM112 55h3v2h-3zM255 26h5v4h-5zM291 30h2v3h-2zM106 23h2v5h-2zM238 41h2v5h-2zM57 15h2v2h-2zM200 33h2v3h-2zM73 32h3v2h-3zM32 20h3v3h-3zM91 30h2v5h-2zM58 9h2v2h-2zM124 25h2v2h-2zM74 28h4v2h-4zM168 30h3v3h-3zM254 2h2v4h-2zM206 15h2v5h-2zM176 32h2v5h-2zM149 44h3v2h-3zM62 5h5v4h-5zM11 12h5v4h-5zM124 44h3v4h-3zM219 4h2v3h-2zM62 1h5v2h-5zM48 40h2v3h-2zM295 13h2v4h-2zM307 39h3v4h-3zM271 46h3v2h-3zM255 59h4v5h-4zM32 13h4v5h-4zM171 34h3v3h-3zM51 49h2v3h-2zM62 12h3v2h-3zM58 25h3v3h-3zM188 58h5v5h-5zM309 36h3v3h-3zM319 44h2v3h-2zM60 37h2v2h-2zM181 55h3v3h-3zM177 48h4v5h-4zM201 12h2v3h-2zM115 51h2v3h-2zM22 54h2v5h-2zM194 1h2v4h-2zM207 50h3v5h-3zM188 -2h5v3h-5zM284 20h5v5h-5zM297 59h2v2h-2zM291 1h4v5h-4zM69 35h5v4h-5zM56 54h5v2h-5zM232 48h2v2h-2zM132 17h3v4h-3zM304 49h5v2h-5zM96 49h4v2h-4zM140 54h3v2h-3zM300 25h3v3h-3zM266 9h5v2h-5zM258 19h2v2h-2zM175 25h3v3h-3zM121 0h5v3h-5zM244 -1h3v2h-3zM282 31h5v2h-5zM266 22h2v5h-2zM92 15h3v2h-3zM89 26h4v3h-4zM4 23h4v2h-4zM67 23h5v3h-5zM296 57h5v3h-5z"/><path fill="#b6b5a5" d="M131 24h5v3h-5zM204 8h4v4h-4zM207 0h2v3h-2zM99 26h3v5h-3zM217 54h3v2h-3zM91 49h2v3h-2zM227 35h2v2h-2zM250 44h2v3h-2zM210 50h5v3h-5zM18 8h4v3h-4zM205 32h2v3h-2zM72 35h3v2h-3zM179 5h3v3h-3zM310 11h4v2h-4zM193 28h2v2h-2zM98 34h4v3h-4zM198 25h2v2h-2zM212 1h2v3h-2zM124 18h3v3h-3zM16 12h3v3h-3zM63 3h4v5h-4zM170 55h3v2h-3zM197 56h2v4h-2zM93 10h4v4h-4zM255 18h4v2h-4zM191 56h2v2h-2zM309 54h3v5h-3zM218 4h2v3h-2zM220 42h3v3h-3zM254 3h3v3h-3zM77 11h3v2h-3zM251 0h2v2h-2zM76 19h3v5h-3zM111 16h4v2h-4zM108 1h3v3h-3zM192 10h3v3h-3zM221 18h2v2h-2zM176 15h3v2h-3zM40 38h5v3h-5zM302 14h3v4h-3zM163 19h2v3h-2zM267 24h2v2h-2zM211 42h3v2h-3zM315 40h2v5h-2zM59 52h2v3h-2zM15 50h4v2h-4zM257 56h5v3h-5zM109 13h4v3h-4zM173 59h2v5h-2zM142 12h3v4h-3zM88 32h3v3h-3zM120 51h4v2h-4zM6 13h4v3h-4zM228 28h2v3h-2zM316 35h2v3h-2zM22 11h2v2h-2zM294 24h2v2h-2z"/><path fill="#a7a696" d="M153 42h3v4h-3zM286 20h3v5h-3zM156 39h3v3h-3zM28 -1h5v5h-5zM100 3h3v3h-3zM124 5h2v5h-2zM212 16h2v2h-2zM23 44h3v5h-3zM143 59h3v2h-3zM212 51h4v2h-4zM105 14h3v2h-3zM285 57h3v4h-3zM219 46h3v5h-3zM284 6h4v5h-4zM121 45h4v2h-4zM73 38h4v5h-4zM166 30h2v4h-2zM310 7h3v5h-3zM82 26h3v4h-3zM9 43h5v3h-5zM203 37h2v4h-2zM176 11h2v5h-2zM265 40h4v5h-4zM116 16h3v5h-3zM79 0h3v3h-3zM69 13h2v4h-2z"/></pattern></defs><rect width="1912" height="60" fill="url(#tx)"/></svg>
<div id="head"></div>
<div id="banner"><span>成人素养班资源调度系统的设计与实现</span></div>

<svg class="abs" style="left:740px;top:160px" width="14" height="15" viewBox="0 0 14 15"><path d="M6.6 1.2L12.4 5.9V13.3H0.9V5.9Z" fill="none" stroke="#3a3a3a" stroke-width="1.15" stroke-linejoin="round"/><path d="M3.9 10.6h2.6" stroke="#3a3a3a" stroke-width="1.1"/></svg>
<div class="nav" style="left:760px">系统首页</div>
<svg class="abs" style="left:856px;top:161px" width="13" height="13" viewBox="0 0 13 13"><path d="M6.30 0.90L8.00 4.25L11.72 4.84L9.06 7.50L9.65 11.21L6.30 9.50L2.95 11.21L3.54 7.50L0.88 4.84L4.60 4.25Z" fill="none" stroke="#3a3a3a" stroke-width="1.1" stroke-linejoin="round"/></svg>
<div class="nav" style="left:876px">资源信息</div>
<svg class="abs" style="left:972px;top:160px" width="13" height="14" viewBox="0 0 13 14"><path d="M1.6 5.1H11.2V12.8H1.6Z" fill="none" stroke="#777" stroke-width="1.1"/><path d="M4.1 5V3.6a2.3 2.3 0 0 1 4.6 0V5" fill="none" stroke="#777" stroke-width="1.1"/></svg>
<div class="nav" style="left:992px">课程信息</div>
<svg class="abs" style="left:1088px;top:161px" width="13" height="13" viewBox="0 0 13 13"><circle cx="6.1" cy="6.4" r="6" fill="#2b2b2b"/><text x="6.1" y="9.9" font-family="Liberation Sans,sans-serif" font-weight="700" font-size="10" fill="#fff" text-anchor="middle">!</text></svg>
<div class="nav" style="left:1108px">新闻公告</div>

<div class="bc" style="left:362px">首页</div>
<div id="pill">课程信息</div>
<div class="bc" style="left:537px">详情</div>

<div id="back"><svg class="abs" style="left:11px;top:8px" width="10" height="15" viewBox="0 0 10 15"><path d="M2.2 6.7L9 0.4V13Z" fill="#fff"/></svg><span>返回</span></div>

<div id="photo"><svg width="590" height="400" viewBox="0 0 590 400" style="display:block"><defs>
<radialGradient id="pbg" cx="0.52" cy="0.5" r="0.75"><stop offset="0" stop-color="#ffefd7"/><stop offset="0.6" stop-color="#feecd4"/><stop offset="1" stop-color="#fbe6cc"/></radialGradient>
<linearGradient id="gA" x1="0" x2="1" y1="0" y2="0"><stop offset="0" stop-color="#8f8b78"/><stop offset="0.45" stop-color="#a19d89"/><stop offset="0.55" stop-color="#bcb8a3"/><stop offset="1" stop-color="#b1ad98"/></linearGradient>
<linearGradient id="gB" x1="0" x2="0.6" y1="0" y2="1"><stop offset="0" stop-color="#cfccb9"/><stop offset="0.5" stop-color="#b3b09b"/><stop offset="1" stop-color="#8a8774"/></linearGradient>
<linearGradient id="gC" x1="0" x2="1" y1="0.1" y2="0.7"><stop offset="0" stop-color="#c3c0ab"/><stop offset="0.45" stop-color="#a9a691"/><stop offset="0.8" stop-color="#807d6b"/><stop offset="1" stop-color="#737060"/></linearGradient>
<linearGradient id="gD" x1="0" x2="0.7" y1="0" y2="1"><stop offset="0" stop-color="#cbc8b2"/><stop offset="1" stop-color="#98957f"/></linearGradient>
<linearGradient id="gR1" x1="0" x2="1" y1="0" y2="0.3"><stop offset="0" stop-color="#9a9783"/><stop offset="0.6" stop-color="#b0ad98"/><stop offset="1" stop-color="#c0bda8"/></linearGradient>
<linearGradient id="gR2" x1="1" x2="0.1" y1="0" y2="0.9"><stop offset="0" stop-color="#cbc7ab"/><stop offset="0.35" stop-color="#b3af95"/><stop offset="0.7" stop-color="#97947c"/><stop offset="1" stop-color="#807d68"/></linearGradient>
<linearGradient id="gR3" x1="0.6" x2="0.2" y1="0" y2="1"><stop offset="0" stop-color="#c1beaa"/><stop offset="0.5" stop-color="#adaa95"/><stop offset="1" stop-color="#8d8a77"/></linearGradient>
<linearGradient id="gR4" x1="1" x2="0" y1="0" y2="1"><stop offset="0" stop-color="#dcd6b6"/><stop offset="1" stop-color="#a9a58c"/></linearGradient>
<path id="arc0" d="M71.0 150.7C72.6 148.1 76.2 141.6 80.8 135.4C85.3 129.2 92.1 120.8 98.3 113.5C104.5 106.2 111.1 98.6 118.0 91.7C124.9 84.8 132.1 78.5 139.7 72.0C147.3 65.5 156.5 57.1 163.8 52.4C171.1 47.7 174.3 47.3 183.4 43.7C192.5 40.1 206.3 34.2 218.3 30.6C230.3 27.0 242.8 23.5 255.5 21.8C268.2 20.1 283.6 20.2 294.8 20.7C306.1 21.2 309.6 20.8 323.0 25.0C336.4 29.2 364.2 41.0 375.5 45.9C386.8 50.8 380.9 47.8 390.8 54.6C400.7 61.5 422.1 75.0 435.0 87.0C447.9 99.0 457.8 113.4 468.0 126.6C478.2 139.8 488.8 153.8 496.5 166.0C504.2 178.2 508.6 187.1 514.0 200.0C519.4 212.9 524.7 228.4 529.0 243.7C533.3 259.0 537.0 275.7 540.0 291.7C543.0 307.7 545.4 325.8 546.7 339.7C548.0 353.6 548.0 364.9 548.0 375.0C548.0 385.1 547.7 389.2 547.0 400.0C546.3 410.8 544.5 433.3 544.0 440.0" fill="none"/>
<path id="arc1" d="M222.7 47.0C232.9 45.9 266.5 40.2 284.0 40.4C301.5 40.6 312.2 41.6 327.5 48.0C342.8 54.4 360.2 69.1 376.0 78.6C391.8 88.1 409.2 95.4 422.0 104.8C434.8 114.2 443.6 124.8 452.8 135.0C462.0 145.2 470.5 156.5 477.0 166.0C483.5 175.5 489.5 187.7 492.0 192.0" fill="none"/>
<path id="arc2" d="M92.8 172.5C96.6 167.0 107.5 150.6 115.7 139.7C123.9 128.8 132.5 116.1 142.0 107.0C151.5 97.9 164.2 90.3 172.5 85.2C180.8 80.1 183.2 79.7 192.0 76.4C200.8 73.1 214.1 68.2 225.0 65.5C235.9 62.8 246.0 60.9 257.6 60.0C269.2 59.1 284.6 59.5 294.8 60.0C305.0 60.5 306.8 59.5 318.8 63.3C330.8 67.1 354.4 77.2 366.8 83.0C379.2 88.8 384.1 91.8 393.0 98.3C401.9 104.8 411.8 113.6 420.0 122.0C428.2 130.4 434.3 138.7 442.0 148.5C449.7 158.3 459.8 172.4 466.0 181.0C472.2 189.6 475.0 191.4 479.0 200.0C483.0 208.6 485.7 220.1 490.0 232.8C494.3 245.5 500.8 261.9 505.0 276.4C509.2 290.9 512.8 305.4 515.0 320.0C517.2 334.6 517.8 350.5 518.3 363.8C518.8 377.1 518.7 387.3 518.3 400.0C517.9 412.7 516.4 433.3 516.0 440.0" fill="none"/>
<path id="arc3" d="M100.4 187.8C104.8 182.0 117.1 164.4 126.6 152.8C136.1 141.2 147.7 127.1 157.2 118.0C166.7 108.9 176.1 102.7 183.4 98.3C190.7 93.9 188.2 95.2 200.9 91.7C213.6 88.2 248.5 80.0 259.8 77.5C271.1 75.0 258.1 75.5 268.6 76.4C279.1 77.3 307.0 79.2 323.0 83.0C339.0 86.8 355.9 95.7 364.6 99.3C373.4 102.9 369.6 101.0 375.5 104.8C381.4 108.6 391.8 114.0 400.0 122.0C408.2 130.0 416.4 141.8 424.5 152.8C432.6 163.8 442.3 179.9 448.5 187.8C454.7 195.7 456.2 190.7 461.6 200.0C467.0 209.3 475.6 229.9 481.0 243.7C486.4 257.5 490.5 269.9 494.0 283.0C497.5 296.1 500.3 308.5 502.0 322.0C503.7 335.5 503.8 350.8 504.0 363.8C504.2 376.8 503.7 387.3 503.0 400.0C502.3 412.7 500.5 433.3 500.0 440.0" fill="none"/>
<path id="arc4" d="M233.6 100.4C242.0 99.7 268.2 95.3 283.8 96.0C299.4 96.7 313.0 100.0 327.5 104.8C342.0 109.5 358.9 118.3 371.0 124.5C383.1 130.7 391.5 134.4 400.0 142.0C408.5 149.6 414.7 160.3 422.0 170.0C429.3 179.7 437.8 191.0 444.0 200.0C450.2 209.0 456.8 220.0 459.4 224.0" fill="none"/>
<path id="arc5" d="M235.8 119.0C243.8 118.1 268.5 113.0 283.8 113.5C299.1 114.0 313.0 117.2 327.5 122.3C342.0 127.4 358.9 137.1 371.0 144.0C383.1 150.9 391.1 154.5 400.0 163.8C408.9 173.1 416.4 188.1 424.5 200.0C432.6 211.9 444.5 229.2 448.5 235.0" fill="none"/>
<path id="arc6" d="M131.0 220.5C132.4 217.1 132.4 209.1 139.7 200.0C147.0 190.9 163.0 175.3 174.7 166.0C186.3 156.7 195.0 149.8 209.6 144.0C224.2 138.2 246.0 132.4 262.0 131.0C278.0 129.6 291.5 132.1 305.7 135.4C319.9 138.7 339.0 147.4 347.0 150.7C355.0 154.0 346.8 151.0 353.7 155.0C360.6 159.0 379.7 167.2 388.6 174.7C397.5 182.2 401.0 191.1 407.0 200.0C413.0 208.9 418.3 217.5 424.5 228.4C430.7 239.3 438.6 252.8 444.0 265.5C449.4 278.2 453.7 291.7 457.0 304.8C460.3 317.9 462.5 328.1 463.8 344.0C465.1 359.9 464.9 384.0 464.8 400.0C464.7 416.0 463.3 433.3 463.0 440.0" fill="none"/>
<path id="arc7" d="M240.0 150.7C247.3 150.3 269.2 147.1 283.8 148.5C298.4 149.9 313.0 153.6 327.5 159.4C342.0 165.2 361.8 176.6 371.0 183.4C380.2 190.2 378.5 193.6 383.0 200.0C387.5 206.4 391.5 213.3 398.0 222.0C404.5 230.7 418.0 247.0 422.0 252.0" fill="none"/>
<filter id="pblur" x="-5%" y="-5%" width="110%" height="110%"><feGaussianBlur stdDeviation="0.9"/></filter>
</defs>
<rect width="590" height="400" fill="url(#pbg)"/>
<g filter="url(#pblur)">
<g font-family="'DejaVu Serif','Liberation Serif',serif" font-weight="700" fill="#6b695d" opacity="0.78">
<text font-size="11.5" dy="3.8"><textPath href="#arc0" startOffset="0" textLength="358" lengthAdjust="spacing">A Better Way to Memorize English Words</textPath></text>
<text font-size="13.5" dy="4.5"><textPath href="#arc0" startOffset="375" textLength="416" lengthAdjust="spacing">A Better Way to Memorize English Words</textPath></text>
<text font-size="11.0" dy="3.6"><textPath href="#arc1" startOffset="0" textLength="329" lengthAdjust="spacing">A Better Way to Memorize English Words</textPath></text>
<text font-size="10.5" dy="3.5"><textPath href="#arc2" startOffset="0" textLength="322" lengthAdjust="spacing">A Better Way to Memorize English Words</textPath></text>
<text font-size="12.5" dy="4.1"><textPath href="#arc2" startOffset="337" textLength="372" lengthAdjust="spacing">A Better Way to Memorize English Words</textPath></text>
<text font-size="10.0" dy="3.3"><textPath href="#arc3" startOffset="0" textLength="313" lengthAdjust="spacing">A Better Way to Memorize English Words</textPath></text>
<text font-size="12.0" dy="4.0"><textPath href="#arc3" startOffset="325" textLength="354" lengthAdjust="spacing">A Better Way to Memorize English Words</textPath></text>
<text font-size="9.5" dy="3.1"><textPath href="#arc4" startOffset="0" textLength="278" lengthAdjust="spacing">A Better Way to Memorize English Words</textPath></text>
<text font-size="8.5" dy="2.8"><textPath href="#arc5" startOffset="0" textLength="263" lengthAdjust="spacing">A Better Way to Memorize English Words</textPath></text>
<text font-size="8.5" dy="2.8"><textPath href="#arc6" startOffset="0" textLength="255" lengthAdjust="spacing">A Better Way to Memorize English Words</textPath></text>
<text font-size="10.5" dy="3.5"><textPath href="#arc6" startOffset="264" textLength="299" lengthAdjust="spacing">A Better Way to Memorize English Words</textPath></text>
<text font-size="7.5" dy="2.5"><textPath href="#arc7" startOffset="0" textLength="225" lengthAdjust="spacing">A Better Way to Memorize English Words</textPath></text>
</g>
<path d="M41.0 404.0L48.0 376.0L64.0 360.0L98.0 340.0L116.0 348.0L165.0 404.0z" fill="#6f6c5a" />
<path d="M37.5 388.4C38.1 391.0 40.4 401.4 41.0 404.0L100.0 404.0C97.7 402.3 94.2 397.8 86.4 393.7C78.6 389.6 58.6 382.0 53.0 379.7z" fill="#aeab95" />
<path d="M38.0 389.5C41.7 390.1 52.3 390.6 60.0 393.0C67.7 395.4 80.0 402.2 84.0 404.0" fill="none" stroke="#cfcbb0" stroke-width="2.2" stroke-linecap="round" opacity="1"/>
<path d="M46.2 369.2C47.7 370.7 49.2 374.5 55.0 378.0C60.8 381.5 72.8 385.7 81.0 390.0C89.2 394.3 100.2 401.7 104.0 404.0L132.0 404.0C129.1 401.7 121.3 395.5 114.3 390.0C107.3 384.5 98.5 376.2 89.8 371.0C81.1 365.8 66.5 360.8 61.9 358.7z" fill="url(#gD)" />
<path d="M64.0 356.0C68.3 358.5 81.3 365.3 90.0 371.0C98.7 376.7 109.0 384.5 116.0 390.0C123.0 395.5 129.3 401.7 132.0 404.0" fill="none" stroke="#67644f" stroke-width="3.2" stroke-linecap="round" opacity="1"/>
<path d="M57.5 344.8C58.5 346.2 58.3 349.4 63.7 353.5C69.1 357.6 81.4 363.4 89.8 369.2C98.2 375.0 107.1 382.6 114.3 388.4C121.5 394.2 129.9 401.4 133.0 404.0L175.0 404.0C170.2 397.0 154.2 373.0 146.0 362.0C137.8 351.0 134.5 344.4 126.0 338.0C117.5 331.6 100.2 326.2 95.0 323.8z" fill="url(#gC)" />
<path d="M60.0 349.0C60.8 349.6 59.4 349.3 64.5 352.5C69.6 355.7 82.1 362.4 90.5 368.2C98.9 374.0 107.8 381.4 115.0 387.4C122.2 393.4 130.8 401.2 134.0 404.0" fill="none" stroke="#d6d2b8" stroke-width="2.0" stroke-linecap="round" opacity="1"/>
<path d="M96.0 289.8C98.5 294.0 105.4 305.8 110.8 315.0C116.2 324.2 121.9 334.6 128.3 344.8C134.7 355.0 142.8 366.3 149.2 376.2C155.6 386.1 164.0 399.4 167.0 404.0L188.0 404.0C185.6 397.6 179.0 377.9 173.7 365.7C168.4 353.5 162.0 341.9 156.2 330.8C150.4 319.8 143.9 307.5 138.7 299.4C133.5 291.3 127.1 284.9 124.8 282.0z" fill="url(#gB)" />
<path d="M131.0 349.0C134.2 353.7 144.2 368.0 150.5 377.2C156.8 386.4 165.5 399.5 168.5 404.0" fill="none" stroke="#cfccb0" stroke-width="2.6" stroke-linecap="round" opacity="0.9"/>
<path d="M149.2 250.5C150.7 256.0 154.5 270.9 158.0 283.7C161.5 296.5 164.8 307.2 170.0 327.3C175.2 347.4 185.8 391.2 189.0 404.0L206.0 404.0C202.9 392.7 192.4 354.6 187.6 336.0C182.8 317.4 180.2 306.4 177.0 292.4C173.8 278.4 169.8 258.9 168.4 252.2z" fill="url(#gA)" />
<path d="M152.5 252.0C153.9 257.3 157.6 271.4 161.0 284.0C164.4 296.6 167.8 307.3 173.0 327.3C178.2 347.3 188.8 391.2 192.0 404.0" fill="none" stroke="#857f6c" stroke-width="2.4" stroke-linecap="round" opacity="0.8"/>
<path d="M300.0 404.0L324.0 358.0L344.0 346.0L378.0 362.0L384.0 404.0z" fill="#8a8772" />
<path d="M379.9 365.7L399.0 378.0L402.5 393.7L401.0 404.0L325.0 404.0z" fill="url(#gR4)" />
<path d="M399.0 385.0C395.8 386.5 386.5 390.8 380.0 394.0C373.5 397.2 363.3 402.3 360.0 404.0" fill="none" stroke="#9f9a7c" stroke-width="2.0" stroke-linecap="round" opacity="1"/>
<path d="M343.2 338.7C339.7 340.9 329.8 346.1 322.2 351.8C314.6 357.5 305.4 365.7 297.8 372.7C290.2 379.7 281.4 388.5 276.8 393.7C272.2 398.9 271.1 402.3 270.0 404.0L324.0 404.0C329.5 399.9 348.2 386.1 357.2 379.7C366.2 373.3 372.5 369.8 378.0 365.7C383.5 361.6 388.2 356.9 390.3 355.2z" fill="url(#gR3)" />
<path d="M311.8 287.0C310.6 287.3 309.5 281.1 304.8 289.0C300.1 296.9 290.2 320.4 283.8 334.3C277.4 348.2 271.4 361.1 266.4 372.7C261.4 384.3 256.1 398.8 254.0 404.0L264.0 404.0C265.0 402.3 265.3 400.1 269.8 393.7C274.3 387.3 283.8 375.0 290.8 365.7C297.8 356.4 304.8 347.7 311.8 337.8C318.8 327.9 327.5 315.0 332.7 306.4C337.9 297.8 341.4 289.6 343.2 286.3z" fill="url(#gR2)" />
<path d="M300.0 354.0C298.5 356.1 295.7 360.1 290.8 366.7C285.9 373.3 275.0 387.5 270.8 393.7C266.6 399.9 266.4 402.3 265.5 404.0" fill="none" stroke="#d1ccae" stroke-width="2.4" stroke-linecap="round" opacity="0.9"/>
<path d="M299.5 268.0C296.9 272.1 290.8 280.8 283.8 292.4C276.8 304.0 265.2 323.2 257.6 337.8C250.0 352.4 243.3 368.7 238.4 379.7C233.5 390.7 229.7 399.9 228.0 404.0L254.5 404.0C256.5 398.8 261.5 384.3 266.4 372.7C271.3 361.1 277.4 348.2 283.8 334.3C290.2 320.4 299.4 300.8 304.8 289.0C310.2 277.2 314.1 267.8 316.0 263.6z" fill="url(#gR1)" />
</g></svg></div>
<div id="thumb"><svg width="139" height="100" preserveAspectRatio="none" viewBox="0 0 590 400" style="display:block"><defs>
<radialGradient id="tpbg" cx="0.52" cy="0.5" r="0.75"><stop offset="0" stop-color="#ffefd7"/><stop offset="0.6" stop-color="#feecd4"/><stop offset="1" stop-color="#fbe6cc"/></radialGradient>
<linearGradient id="tgA" x1="0" x2="1" y1="0" y2="0"><stop offset="0" stop-color="#8f8b78"/><stop offset="0.45" stop-color="#a19d89"/><stop offset="0.55" stop-color="#bcb8a3"/><stop offset="1" stop-color="#b1ad98"/></linearGradient>
<linearGradient id="tgB" x1="0" x2="0.6" y1="0" y2="1"><stop offset="0" stop-color="#cfccb9"/><stop offset="0.5" stop-color="#b3b09b"/><stop offset="1" stop-color="#8a8774"/></linearGradient>
<linearGradient id="tgC" x1="0" x2="1" y1="0.1" y2="0.7"><stop offset="0" stop-color="#c3c0ab"/><stop offset="0.45" stop-color="#a9a691"/><stop offset="0.8" stop-color="#807d6b"/><stop offset="1" stop-color="#737060"/></linearGradient>
<linearGradient id="tgD" x1="0" x2="0.7" y1="0" y2="1"><stop offset="0" stop-color="#cbc8b2"/><stop offset="1" stop-color="#98957f"/></linearGradient>
<linearGradient id="tgR1" x1="0" x2="1" y1="0" y2="0.3"><stop offset="0" stop-color="#9a9783"/><stop offset="0.6" stop-color="#b0ad98"/><stop offset="1" stop-color="#c0bda8"/></linearGradient>
<linearGradient id="tgR2" x1="1" x2="0.1" y1="0" y2="0.9"><stop offset="0" stop-color="#cbc7ab"/><stop offset="0.35" stop-color="#b3af95"/><stop offset="0.7" stop-color="#97947c"/><stop offset="1" stop-color="#807d68"/></linearGradient>
<linearGradient id="tgR3" x1="0.6" x2="0.2" y1="0" y2="1"><stop offset="0" stop-color="#c1beaa"/><stop offset="0.5" stop-color="#adaa95"/><stop offset="1" stop-color="#8d8a77"/></linearGradient>
<linearGradient id="tgR4" x1="1" x2="0" y1="0" y2="1"><stop offset="0" stop-color="#dcd6b6"/><stop offset="1" stop-color="#a9a58c"/></linearGradient>
<path id="tarc0" d="M71.0 150.7C72.6 148.1 76.2 141.6 80.8 135.4C85.3 129.2 92.1 120.8 98.3 113.5C104.5 106.2 111.1 98.6 118.0 91.7C124.9 84.8 132.1 78.5 139.7 72.0C147.3 65.5 156.5 57.1 163.8 52.4C171.1 47.7 174.3 47.3 183.4 43.7C192.5 40.1 206.3 34.2 218.3 30.6C230.3 27.0 242.8 23.5 255.5 21.8C268.2 20.1 283.6 20.2 294.8 20.7C306.1 21.2 309.6 20.8 323.0 25.0C336.4 29.2 364.2 41.0 375.5 45.9C386.8 50.8 380.9 47.8 390.8 54.6C400.7 61.5 422.1 75.0 435.0 87.0C447.9 99.0 457.8 113.4 468.0 126.6C478.2 139.8 488.8 153.8 496.5 166.0C504.2 178.2 508.6 187.1 514.0 200.0C519.4 212.9 524.7 228.4 529.0 243.7C533.3 259.0 537.0 275.7 540.0 291.7C543.0 307.7 545.4 325.8 546.7 339.7C548.0 353.6 548.0 364.9 548.0 375.0C548.0 385.1 547.7 389.2 547.0 400.0C546.3 410.8 544.5 433.3 544.0 440.0" fill="none"/>
<path id="tarc1" d="M222.7 47.0C232.9 45.9 266.5 40.2 284.0 40.4C301.5 40.6 312.2 41.6 327.5 48.0C342.8 54.4 360.2 69.1 376.0 78.6C391.8 88.1 409.2 95.4 422.0 104.8C434.8 114.2 443.6 124.8 452.8 135.0C462.0 145.2 470.5 156.5 477.0 166.0C483.5 175.5 489.5 187.7 492.0 192.0" fill="none"/>
<path id="tarc2" d="M92.8 172.5C96.6 167.0 107.5 150.6 115.7 139.7C123.9 128.8 132.5 116.1 142.0 107.0C151.5 97.9 164.2 90.3 172.5 85.2C180.8 80.1 183.2 79.7 192.0 76.4C200.8 73.1 214.1 68.2 225.0 65.5C235.9 62.8 246.0 60.9 257.6 60.0C269.2 59.1 284.6 59.5 294.8 60.0C305.0 60.5 306.8 59.5 318.8 63.3C330.8 67.1 354.4 77.2 366.8 83.0C379.2 88.8 384.1 91.8 393.0 98.3C401.9 104.8 411.8 113.6 420.0 122.0C428.2 130.4 434.3 138.7 442.0 148.5C449.7 158.3 459.8 172.4 466.0 181.0C472.2 189.6 475.0 191.4 479.0 200.0C483.0 208.6 485.7 220.1 490.0 232.8C494.3 245.5 500.8 261.9 505.0 276.4C509.2 290.9 512.8 305.4 515.0 320.0C517.2 334.6 517.8 350.5 518.3 363.8C518.8 377.1 518.7 387.3 518.3 400.0C517.9 412.7 516.4 433.3 516.0 440.0" fill="none"/>
<path id="tarc3" d="M100.4 187.8C104.8 182.0 117.1 164.4 126.6 152.8C136.1 141.2 147.7 127.1 157.2 118.0C166.7 108.9 176.1 102.7 183.4 98.3C190.7 93.9 188.2 95.2 200.9 91.7C213.6 88.2 248.5 80.0 259.8 77.5C271.1 75.0 258.1 75.5 268.6 76.4C279.1 77.3 307.0 79.2 323.0 83.0C339.0 86.8 355.9 95.7 364.6 99.3C373.4 102.9 369.6 101.0 375.5 104.8C381.4 108.6 391.8 114.0 400.0 122.0C408.2 130.0 416.4 141.8 424.5 152.8C432.6 163.8 442.3 179.9 448.5 187.8C454.7 195.7 456.2 190.7 461.6 200.0C467.0 209.3 475.6 229.9 481.0 243.7C486.4 257.5 490.5 269.9 494.0 283.0C497.5 296.1 500.3 308.5 502.0 322.0C503.7 335.5 503.8 350.8 504.0 363.8C504.2 376.8 503.7 387.3 503.0 400.0C502.3 412.7 500.5 433.3 500.0 440.0" fill="none"/>
<path id="tarc4" d="M233.6 100.4C242.0 99.7 268.2 95.3 283.8 96.0C299.4 96.7 313.0 100.0 327.5 104.8C342.0 109.5 358.9 118.3 371.0 124.5C383.1 130.7 391.5 134.4 400.0 142.0C408.5 149.6 414.7 160.3 422.0 170.0C429.3 179.7 437.8 191.0 444.0 200.0C450.2 209.0 456.8 220.0 459.4 224.0" fill="none"/>
<path id="tarc5" d="M235.8 119.0C243.8 118.1 268.5 113.0 283.8 113.5C299.1 114.0 313.0 117.2 327.5 122.3C342.0 127.4 358.9 137.1 371.0 144.0C383.1 150.9 391.1 154.5 400.0 163.8C408.9 173.1 416.4 188.1 424.5 200.0C432.6 211.9 444.5 229.2 448.5 235.0" fill="none"/>
<path id="tarc6" d="M131.0 220.5C132.4 217.1 132.4 209.1 139.7 200.0C147.0 190.9 163.0 175.3 174.7 166.0C186.3 156.7 195.0 149.8 209.6 144.0C224.2 138.2 246.0 132.4 262.0 131.0C278.0 129.6 291.5 132.1 305.7 135.4C319.9 138.7 339.0 147.4 347.0 150.7C355.0 154.0 346.8 151.0 353.7 155.0C360.6 159.0 379.7 167.2 388.6 174.7C397.5 182.2 401.0 191.1 407.0 200.0C413.0 208.9 418.3 217.5 424.5 228.4C430.7 239.3 438.6 252.8 444.0 265.5C449.4 278.2 453.7 291.7 457.0 304.8C460.3 317.9 462.5 328.1 463.8 344.0C465.1 359.9 464.9 384.0 464.8 400.0C464.7 416.0 463.3 433.3 463.0 440.0" fill="none"/>
<path id="tarc7" d="M240.0 150.7C247.3 150.3 269.2 147.1 283.8 148.5C298.4 149.9 313.0 153.6 327.5 159.4C342.0 165.2 361.8 176.6 371.0 183.4C380.2 190.2 378.5 193.6 383.0 200.0C387.5 206.4 391.5 213.3 398.0 222.0C404.5 230.7 418.0 247.0 422.0 252.0" fill="none"/>
<filter id="tpblur" x="-5%" y="-5%" width="110%" height="110%"><feGaussianBlur stdDeviation="0.9"/></filter>
</defs>
<rect width="590" height="400" fill="url(#tpbg)"/>
<g filter="url(#tpblur)">
<g font-family="'DejaVu Serif','Liberation Serif',serif" font-weight="700" fill="#6b695d" opacity="0.78">
<text font-size="11.5" dy="3.8"><textPath href="#tarc0" startOffset="0" textLength="358" lengthAdjust="spacing">A Better Way to Memorize English Words</textPath></text>
<text font-size="13.5" dy="4.5"><textPath href="#tarc0" startOffset="375" textLength="416" lengthAdjust="spacing">A Better Way to Memorize English Words</textPath></text>
<text font-size="11.0" dy="3.6"><textPath href="#tarc1" startOffset="0" textLength="329" lengthAdjust="spacing">A Better Way to Memorize English Words</textPath></text>
<text font-size="10.5" dy="3.5"><textPath href="#tarc2" startOffset="0" textLength="322" lengthAdjust="spacing">A Better Way to Memorize English Words</textPath></text>
<text font-size="12.5" dy="4.1"><textPath href="#tarc2" startOffset="337" textLength="372" lengthAdjust="spacing">A Better Way to Memorize English Words</textPath></text>
<text font-size="10.0" dy="3.3"><textPath href="#tarc3" startOffset="0" textLength="313" lengthAdjust="spacing">A Better Way to Memorize English Words</textPath></text>
<text font-size="12.0" dy="4.0"><textPath href="#tarc3" startOffset="325" textLength="354" lengthAdjust="spacing">A Better Way to Memorize English Words</textPath></text>
<text font-size="9.5" dy="3.1"><textPath href="#tarc4" startOffset="0" textLength="278" lengthAdjust="spacing">A Better Way to Memorize English Words</textPath></text>
<text font-size="8.5" dy="2.8"><textPath href="#tarc5" startOffset="0" textLength="263" lengthAdjust="spacing">A Better Way to Memorize English Words</textPath></text>
<text font-size="8.5" dy="2.8"><textPath href="#tarc6" startOffset="0" textLength="255" lengthAdjust="spacing">A Better Way to Memorize English Words</textPath></text>
<text font-size="10.5" dy="3.5"><textPath href="#tarc6" startOffset="264" textLength="299" lengthAdjust="spacing">A Better Way to Memorize English Words</textPath></text>
<text font-size="7.5" dy="2.5"><textPath href="#tarc7" startOffset="0" textLength="225" lengthAdjust="spacing">A Better Way to Memorize English Words</textPath></text>
</g>
<path d="M41.0 404.0L48.0 376.0L64.0 360.0L98.0 340.0L116.0 348.0L165.0 404.0z" fill="#6f6c5a" />
<path d="M37.5 388.4C38.1 391.0 40.4 401.4 41.0 404.0L100.0 404.0C97.7 402.3 94.2 397.8 86.4 393.7C78.6 389.6 58.6 382.0 53.0 379.7z" fill="#aeab95" />
<path d="M38.0 389.5C41.7 390.1 52.3 390.6 60.0 393.0C67.7 395.4 80.0 402.2 84.0 404.0" fill="none" stroke="#cfcbb0" stroke-width="2.2" stroke-linecap="round" opacity="1"/>
<path d="M46.2 369.2C47.7 370.7 49.2 374.5 55.0 378.0C60.8 381.5 72.8 385.7 81.0 390.0C89.2 394.3 100.2 401.7 104.0 404.0L132.0 404.0C129.1 401.7 121.3 395.5 114.3 390.0C107.3 384.5 98.5 376.2 89.8 371.0C81.1 365.8 66.5 360.8 61.9 358.7z" fill="url(#tgD)" />
<path d="M64.0 356.0C68.3 358.5 81.3 365.3 90.0 371.0C98.7 376.7 109.0 384.5 116.0 390.0C123.0 395.5 129.3 401.7 132.0 404.0" fill="none" stroke="#67644f" stroke-width="3.2" stroke-linecap="round" opacity="1"/>
<path d="M57.5 344.8C58.5 346.2 58.3 349.4 63.7 353.5C69.1 357.6 81.4 363.4 89.8 369.2C98.2 375.0 107.1 382.6 114.3 388.4C121.5 394.2 129.9 401.4 133.0 404.0L175.0 404.0C170.2 397.0 154.2 373.0 146.0 362.0C137.8 351.0 134.5 344.4 126.0 338.0C117.5 331.6 100.2 326.2 95.0 323.8z" fill="url(#tgC)" />
<path d="M60.0 349.0C60.8 349.6 59.4 349.3 64.5 352.5C69.6 355.7 82.1 362.4 90.5 368.2C98.9 374.0 107.8 381.4 115.0 387.4C122.2 393.4 130.8 401.2 134.0 404.0" fill="none" stroke="#d6d2b8" stroke-width="2.0" stroke-linecap="round" opacity="1"/>
<path d="M96.0 289.8C98.5 294.0 105.4 305.8 110.8 315.0C116.2 324.2 121.9 334.6 128.3 344.8C134.7 355.0 142.8 366.3 149.2 376.2C155.6 386.1 164.0 399.4 167.0 404.0L188.0 404.0C185.6 397.6 179.0 377.9 173.7 365.7C168.4 353.5 162.0 341.9 156.2 330.8C150.4 319.8 143.9 307.5 138.7 299.4C133.5 291.3 127.1 284.9 124.8 282.0z" fill="url(#tgB)" />
<path d="M131.0 349.0C134.2 353.7 144.2 368.0 150.5 377.2C156.8 386.4 165.5 399.5 168.5 404.0" fill="none" stroke="#cfccb0" stroke-width="2.6" stroke-linecap="round" opacity="0.9"/>
<path d="M149.2 250.5C150.7 256.0 154.5 270.9 158.0 283.7C161.5 296.5 164.8 307.2 170.0 327.3C175.2 347.4 185.8 391.2 189.0 404.0L206.0 404.0C202.9 392.7 192.4 354.6 187.6 336.0C182.8 317.4 180.2 306.4 177.0 292.4C173.8 278.4 169.8 258.9 168.4 252.2z" fill="url(#tgA)" />
<path d="M152.5 252.0C153.9 257.3 157.6 271.4 161.0 284.0C164.4 296.6 167.8 307.3 173.0 327.3C178.2 347.3 188.8 391.2 192.0 404.0" fill="none" stroke="#857f6c" stroke-width="2.4" stroke-linecap="round" opacity="0.8"/>
<path d="M300.0 404.0L324.0 358.0L344.0 346.0L378.0 362.0L384.0 404.0z" fill="#8a8772" />
<path d="M379.9 365.7L399.0 378.0L402.5 393.7L401.0 404.0L325.0 404.0z" fill="url(#tgR4)" />
<path d="M399.0 385.0C395.8 386.5 386.5 390.8 380.0 394.0C373.5 397.2 363.3 402.3 360.0 404.0" fill="none" stroke="#9f9a7c" stroke-width="2.0" stroke-linecap="round" opacity="1"/>
<path d="M343.2 338.7C339.7 340.9 329.8 346.1 322.2 351.8C314.6 357.5 305.4 365.7 297.8 372.7C290.2 379.7 281.4 388.5 276.8 393.7C272.2 398.9 271.1 402.3 270.0 404.0L324.0 404.0C329.5 399.9 348.2 386.1 357.2 379.7C366.2 373.3 372.5 369.8 378.0 365.7C383.5 361.6 388.2 356.9 390.3 355.2z" fill="url(#tgR3)" />
<path d="M311.8 287.0C310.6 287.3 309.5 281.1 304.8 289.0C300.1 296.9 290.2 320.4 283.8 334.3C277.4 348.2 271.4 361.1 266.4 372.7C261.4 384.3 256.1 398.8 254.0 404.0L264.0 404.0C265.0 402.3 265.3 400.1 269.8 393.7C274.3 387.3 283.8 375.0 290.8 365.7C297.8 356.4 304.8 347.7 311.8 337.8C318.8 327.9 327.5 315.0 332.7 306.4C337.9 297.8 341.4 289.6 343.2 286.3z" fill="url(#tgR2)" />
<path d="M300.0 354.0C298.5 356.1 295.7 360.1 290.8 366.7C285.9 373.3 275.0 387.5 270.8 393.7C266.6 399.9 266.4 402.3 265.5 404.0" fill="none" stroke="#d1ccae" stroke-width="2.4" stroke-linecap="round" opacity="0.9"/>
<path d="M299.5 268.0C296.9 272.1 290.8 280.8 283.8 292.4C276.8 304.0 265.2 323.2 257.6 337.8C250.0 352.4 243.3 368.7 238.4 379.7C233.5 390.7 229.7 399.9 228.0 404.0L254.5 404.0C256.5 398.8 261.5 384.3 266.4 372.7C271.3 361.1 277.4 348.2 283.8 334.3C290.2 320.4 299.4 300.8 304.8 289.0C310.2 277.2 314.1 267.8 316.0 263.6z" fill="url(#tgR1)" />
</g></svg></div>

<div id="panel"></div>
<div id="trow"><span>课程1</span></div>
<div class="row" style="top:357px"><span class="l">课程类型</span><span class="v">类型1</span></div>
<div class="row" style="top:402px"><span class="l">学习状态</span><span class="v">已学习</span></div>
<div class="row" style="top:447px"><span class="l">课程时长</span><span class="v d">2</span></div>
<div class="row" style="top:492px"><span class="l">发布时间</span><span class="v d">2025-02-25</span></div>
<div class="row" style="top:537px"><span class="l">课程简介</span><span class="v">简介1</span></div>
<div class="row" style="top:582px"><span class="l">教师账号</span><span class="v d">22</span></div>
<div class="row" style="top:627px"><span class="l">教师姓名</span><span class="v">李二</span></div>
<div class="row" style="top:672px"><span class="l">电话号码</span><span class="v d">13578978978</span></div>
<div id="study">学习</div>
<div id="next"></div>

<div id="avatar"><svg width="32" height="32" viewBox="0 0 32 32"><defs><filter id="avb" x="-10%" y="-10%" width="120%" height="120%"><feGaussianBlur stdDeviation="0.9"/></filter></defs><rect width="32" height="32" fill="#b6d5f6"/><g filter="url(#avb)"><path d="M-1 4L5 2L2 14L-1 18Z" fill="#c9d6e2"/><path d="M8 1C13 -1.5 19 0.5 19.6 8C19.7 12 19 14 18 16L16 18.5C12 20 9 19 8 22C6.5 26 6.5 29 5 31C2 28 -0.5 22 0.8 16C1.8 9 4 3 8 1Z" fill="#37322e"/><path d="M2 18C3 22 4 26 6 30L3 29C1 26 0.5 22 2 18Z" fill="#77726d"/><path d="M10.2 8.5C11.5 6.2 16.2 6 17.3 9C18 11.5 17.2 14.5 15.8 16.4C14 18 11.6 17 10.6 14.5C9.8 12.5 9.6 10.2 10.2 8.5Z" fill="#e3cabf"/><path d="M13.5 9.5C15 8.5 16.5 9.5 16.4 11.5C16.2 13 15 14 14 13.5C13 12.5 12.8 10.5 13.5 9.5Z" fill="#f7e9e2"/><path d="M6.8 21.5C8.5 17.2 13.5 16 15 18.5L16.2 32H8C6.2 28.5 5.8 24.5 6.8 21.5Z" fill="#f1eeec"/><path d="M14.2 17.2C16.2 17.8 17.6 20 18.2 23L19.8 33H14.8Z" fill="#1c1e32"/><path d="M10.5 7.5C12 5 16 4.5 18 7.5C16 6.5 13 6.5 10.5 9Z" fill="#3f3834"/></g></svg></div>
<div id="user">欢迎11</div>
<svg class="abs" style="left:1791px;top:19px" width="11" height="8" viewBox="0 0 11 8"><path d="M0.6 0.8H10L5.3 6.9Z" fill="#111"/></svg>
<div id="menu"></div>
<svg class="abs" style="left:1720px;top:67px" width="14" height="13" viewBox="0 0 14 13"><path d="M5.6 1.2a2.9 2.9 0 0 1 0 5.8a2.9 2.9 0 0 1 0-5.8ZM1.1 11.4c0-2.4 1.8-4.2 4.5-4.2s4.5 1.8 4.5 4.2Z" fill="none" stroke="#666" stroke-width="1.1" stroke-linejoin="round"/><path d="M11.6 2.2v4.4M11.6 8.2v1.2" stroke="#666" stroke-width="1.1"/></svg>
<div class="mi" style="top:63px">个人中心</div>
<svg class="abs" style="left:1720px;top:98px" width="14" height="14" viewBox="0 0 14 14"><path d="M4.3 2.6a5.2 5.2 0 1 0 5.2 0" fill="none" stroke="#666" stroke-width="1.05"/><path d="M6.9 0.9v6" stroke="#666" stroke-width="1.05"/></svg>
<div class="mi" style="top:94px">退出</div>
<svg class="abs" style="left:1719px;top:54px" width="12" height="5" viewBox="0 0 12 5"><path d="M0 5L6 0L12 5Z" fill="#fbfbf9"/></svg>
<svg class="abs" style="left:1769px;top:36px" width="14" height="21" viewBox="0 0 14 21"><path d="M1.3 1.2V16.6L4.9 13.3L7.5 19.3L9.9 18.3L7.4 12.5H12.2Z" fill="#fff" stroke="#111" stroke-width="1.1" stroke-linejoin="round"/></svg>
</div>
<div id="sb"><i></i><svg style="top:0" width="9" height="5" viewBox="0 0 9 5"><path d="M4.6 4L9.6 -1.5V4Z" fill="#4a4a4a"/></svg><svg style="top:899px" width="9" height="8" viewBox="0 0 9 8"><path d="M4.8 2H9.5V7.2Z" fill="#4a4a4a"/></svg></div>
<div id="task"><i></i></div>
</body>
</html>
